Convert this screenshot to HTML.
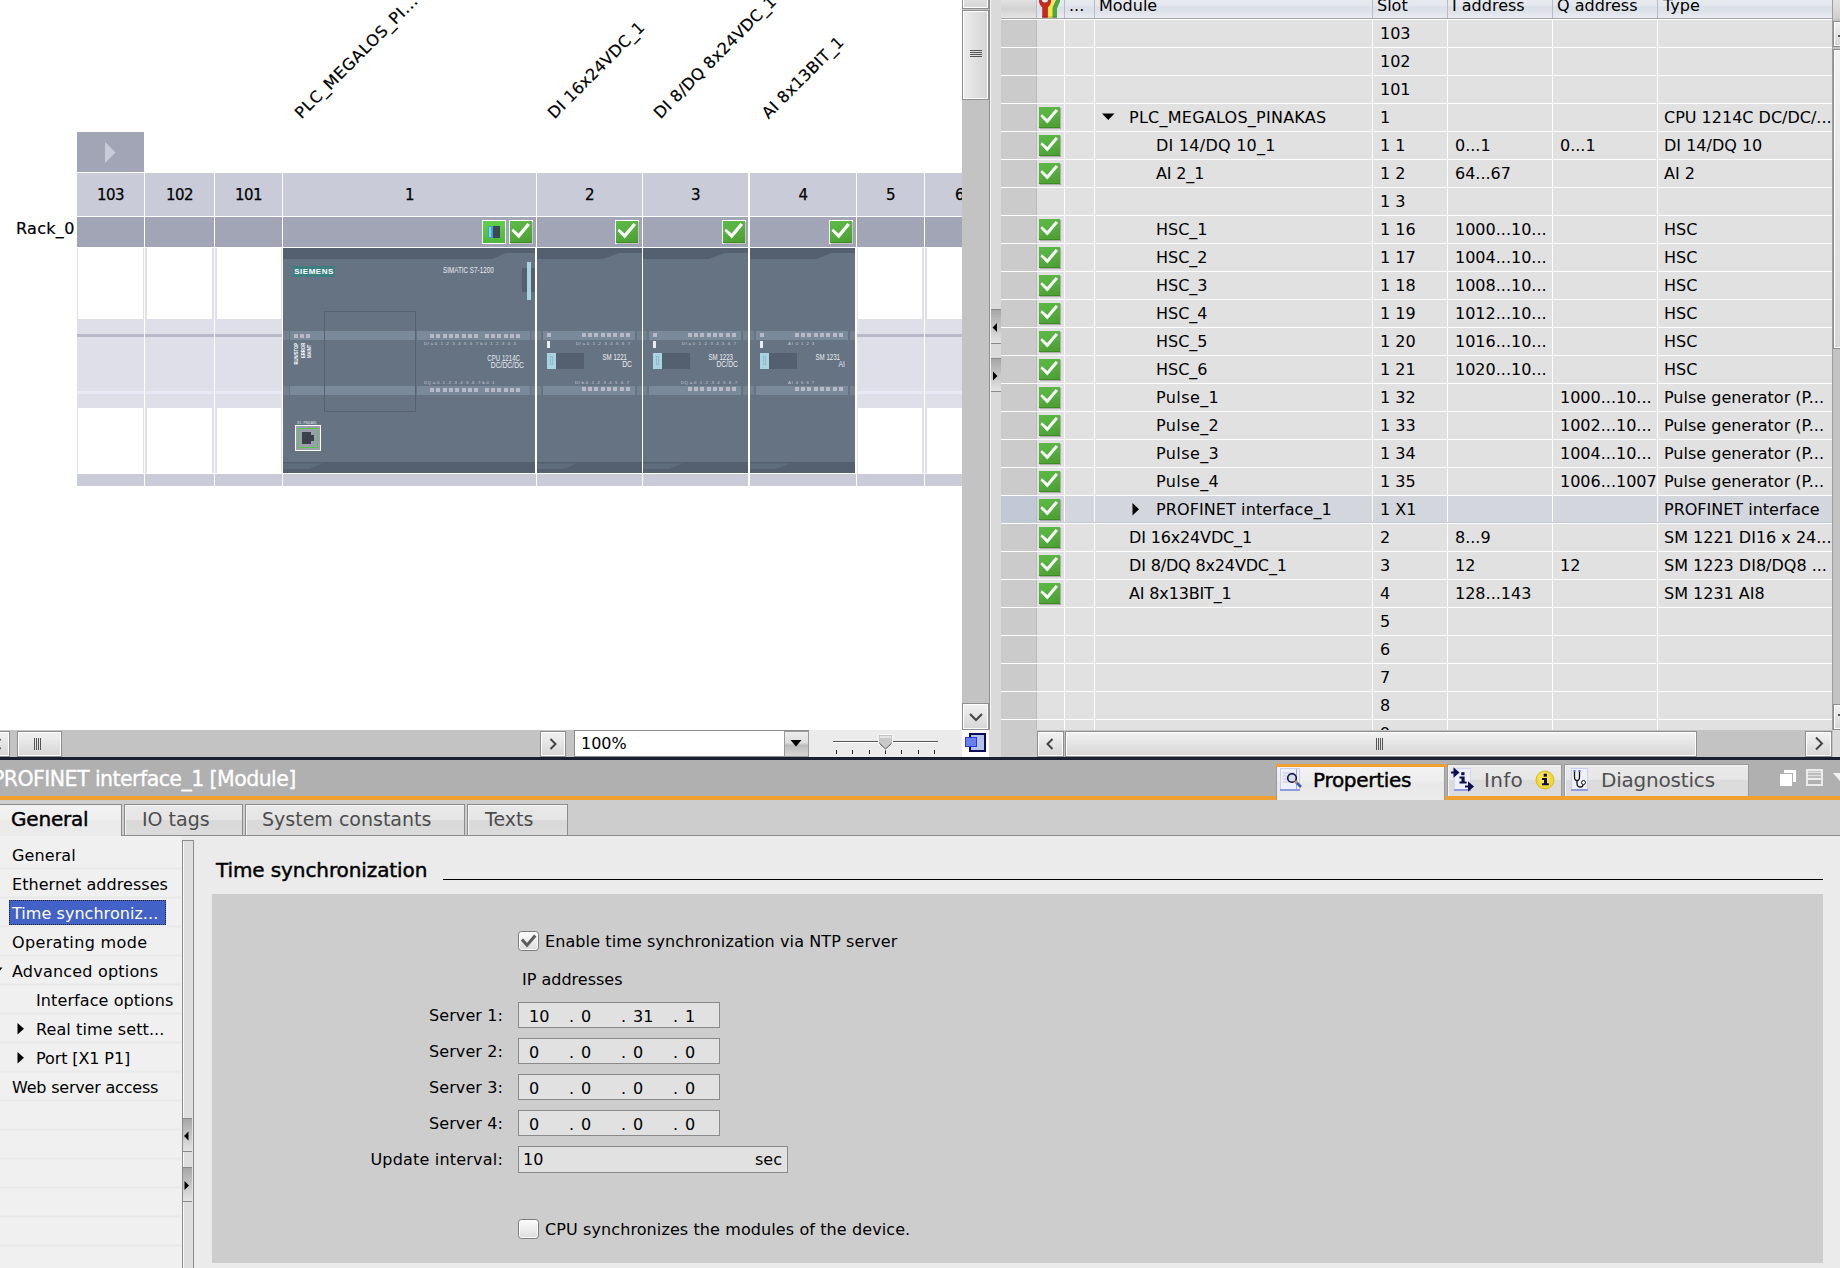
<!DOCTYPE html>
<html><head><meta charset="utf-8"><title>PROFINET interface_1 [Module]</title>
<style>
*{box-sizing:border-box;margin:0;padding:0}
html,body{width:1840px;height:1268px;overflow:hidden;background:#fff}
body{position:relative;font-family:'DejaVu Sans','Liberation Sans',sans-serif;font-size:16px;color:#000;line-height:1}
.a{position:absolute}
.t{position:absolute;white-space:nowrap;line-height:20px;height:20px}
.b{font-family:'DejaVu Sans','Liberation Sans',sans-serif;-webkit-text-stroke:0.45px #000}
svg{position:absolute;overflow:visible}
</style></head><body>

<div class="a" id="dev" style="left:0;top:0;width:962px;height:730px;background:#fff;overflow:hidden">
<div class="t" style="left:305px;top:103px;font-size:16px;transform-origin:0 100%;transform:rotate(-45deg);letter-spacing:0.75px;-webkit-text-stroke:0.2px #000">PLC_MEGALOS_PI...</div>
<div class="t" style="left:558px;top:103px;font-size:16px;transform-origin:0 100%;transform:rotate(-45deg);letter-spacing:0.3px;-webkit-text-stroke:0.2px #000">DI 16x24VDC_1</div>
<div class="t" style="left:664px;top:103px;font-size:16px;transform-origin:0 100%;transform:rotate(-45deg);letter-spacing:0.3px;-webkit-text-stroke:0.2px #000">DI 8/DQ 8x24VDC_1</div>
<div class="t" style="left:772px;top:103px;font-size:16px;transform-origin:0 100%;transform:rotate(-45deg);letter-spacing:0.3px;-webkit-text-stroke:0.2px #000">AI 8x13BIT_1</div>
<div class="a" style="left:77px;top:132px;width:67px;height:40px;background:#a2a5b6;"></div>
<svg class="a" style="left:105px;top:142px" width="11" height="22"><path d="M0 0 L10.5 10.5 L0 21 Z" fill="#c9cbd8"/></svg>
<div class="a" style="left:77px;top:173px;width:67px;height:43px;background:#c9cbd8;"></div>
<div class="a" style="left:77px;top:217px;width:67px;height:30px;background:#a2a5b6;"></div>
<div class="a" style="left:77px;top:474px;width:67px;height:12px;background:#c9cbd8;"></div>
<div class="t" style="left:77px;top:184.5px;width:67px;text-align:center;font-size:15px;letter-spacing:-0.6px;-webkit-text-stroke:0.25px #000">103</div>
<div class="a" style="left:145px;top:173px;width:69px;height:43px;background:#c9cbd8;"></div>
<div class="a" style="left:145px;top:217px;width:69px;height:30px;background:#a2a5b6;"></div>
<div class="a" style="left:145px;top:474px;width:69px;height:12px;background:#c9cbd8;"></div>
<div class="t" style="left:145px;top:184.5px;width:69px;text-align:center;font-size:15px;letter-spacing:-0.6px;-webkit-text-stroke:0.25px #000">102</div>
<div class="a" style="left:215px;top:173px;width:67px;height:43px;background:#c9cbd8;"></div>
<div class="a" style="left:215px;top:217px;width:67px;height:30px;background:#a2a5b6;"></div>
<div class="a" style="left:215px;top:474px;width:67px;height:12px;background:#c9cbd8;"></div>
<div class="t" style="left:215px;top:184.5px;width:67px;text-align:center;font-size:15px;letter-spacing:-0.6px;-webkit-text-stroke:0.25px #000">101</div>
<div class="a" style="left:283px;top:173px;width:253px;height:43px;background:#c9cbd8;"></div>
<div class="a" style="left:283px;top:217px;width:253px;height:30px;background:#a2a5b6;"></div>
<div class="a" style="left:283px;top:474px;width:253px;height:12px;background:#c9cbd8;"></div>
<div class="t" style="left:283px;top:184.5px;width:253px;text-align:center;font-size:15px;letter-spacing:-0.6px;-webkit-text-stroke:0.25px #000">1</div>
<div class="a" style="left:537px;top:173px;width:105px;height:43px;background:#c9cbd8;"></div>
<div class="a" style="left:537px;top:217px;width:105px;height:30px;background:#a2a5b6;"></div>
<div class="a" style="left:537px;top:474px;width:105px;height:12px;background:#c9cbd8;"></div>
<div class="t" style="left:537px;top:184.5px;width:105px;text-align:center;font-size:15px;letter-spacing:-0.6px;-webkit-text-stroke:0.25px #000">2</div>
<div class="a" style="left:643px;top:173px;width:105px;height:43px;background:#c9cbd8;"></div>
<div class="a" style="left:643px;top:217px;width:105px;height:30px;background:#a2a5b6;"></div>
<div class="a" style="left:643px;top:474px;width:105px;height:12px;background:#c9cbd8;"></div>
<div class="t" style="left:643px;top:184.5px;width:105px;text-align:center;font-size:15px;letter-spacing:-0.6px;-webkit-text-stroke:0.25px #000">3</div>
<div class="a" style="left:750px;top:173px;width:106px;height:43px;background:#c9cbd8;"></div>
<div class="a" style="left:750px;top:217px;width:106px;height:30px;background:#a2a5b6;"></div>
<div class="a" style="left:750px;top:474px;width:106px;height:12px;background:#c9cbd8;"></div>
<div class="t" style="left:750px;top:184.5px;width:106px;text-align:center;font-size:15px;letter-spacing:-0.6px;-webkit-text-stroke:0.25px #000">4</div>
<div class="a" style="left:857px;top:173px;width:67px;height:43px;background:#c9cbd8;"></div>
<div class="a" style="left:857px;top:217px;width:67px;height:30px;background:#a2a5b6;"></div>
<div class="a" style="left:857px;top:474px;width:67px;height:12px;background:#c9cbd8;"></div>
<div class="t" style="left:857px;top:184.5px;width:67px;text-align:center;font-size:15px;letter-spacing:-0.6px;-webkit-text-stroke:0.25px #000">5</div>
<div class="a" style="left:925px;top:173px;width:37px;height:43px;background:#c9cbd8;"></div>
<div class="a" style="left:925px;top:217px;width:37px;height:30px;background:#a2a5b6;"></div>
<div class="a" style="left:925px;top:474px;width:37px;height:12px;background:#c9cbd8;"></div>
<div class="t" style="left:955px;top:184.5px;font-size:15px;-webkit-text-stroke:0.25px #000">6</div>
<div class="t" style="left:16px;top:219px;font-size:16px;color:#000;letter-spacing:0.3px;-webkit-text-stroke:0.2px #000">Rack_0</div>
<div class="a" style="left:77px;top:248px;width:67px;height:225px;background:#fff;border-left:1px solid #dfdfe9;border-right:1px solid #dfdfe9"></div>
<div class="a" style="left:77px;top:319px;width:67px;height:89px;background:#dfdfe9;"></div>
<div class="a" style="left:77px;top:334px;width:67px;height:3px;background:#b9bac9;"></div>
<div class="a" style="left:77px;top:391px;width:67px;height:3px;background:#e8e9f6;"></div>
<div class="a" style="left:145px;top:248px;width:69px;height:225px;background:#fff;border-left:2px solid #dfdfe9;border-right:2px solid #dfdfe9"></div>
<div class="a" style="left:145px;top:319px;width:69px;height:89px;background:#dfdfe9;"></div>
<div class="a" style="left:145px;top:334px;width:69px;height:3px;background:#b9bac9;"></div>
<div class="a" style="left:145px;top:391px;width:69px;height:3px;background:#e8e9f6;"></div>
<div class="a" style="left:215px;top:248px;width:67px;height:225px;background:#fff;border-left:2px solid #dfdfe9;border-right:1px solid #dfdfe9"></div>
<div class="a" style="left:215px;top:319px;width:67px;height:89px;background:#dfdfe9;"></div>
<div class="a" style="left:215px;top:334px;width:67px;height:3px;background:#b9bac9;"></div>
<div class="a" style="left:215px;top:391px;width:67px;height:3px;background:#e8e9f6;"></div>
<div class="a" style="left:857px;top:248px;width:67px;height:225px;background:#fff;border-left:1px solid #dfdfe9;border-right:2px solid #dfdfe9"></div>
<div class="a" style="left:857px;top:319px;width:67px;height:89px;background:#dfdfe9;"></div>
<div class="a" style="left:857px;top:334px;width:67px;height:3px;background:#b9bac9;"></div>
<div class="a" style="left:857px;top:391px;width:67px;height:3px;background:#e8e9f6;"></div>
<div class="a" style="left:925px;top:248px;width:37px;height:225px;background:#fff;border-left:2px solid #dfdfe9;border-right:0px solid #dfdfe9"></div>
<div class="a" style="left:925px;top:319px;width:37px;height:89px;background:#dfdfe9;"></div>
<div class="a" style="left:925px;top:334px;width:37px;height:3px;background:#b9bac9;"></div>
<div class="a" style="left:925px;top:391px;width:37px;height:3px;background:#e8e9f6;"></div>
<div class="a" style="left:283px;top:248px;width:252px;height:225px;background:#667383;overflow:hidden">
<svg style="left:0;top:0" width="252" height="225"><path d="M0 0 H252 V5 H223 L209 11 H0 Z" fill="#54606f"/>
<path d="M0 214 H252 V225 H0 Z" fill="#54606f"/><path d="M0 215.5 H40 L26 221 H0 Z" fill="#5f6c7b"/></svg>
</div>
<div class="a" style="left:283px;top:331px;width:6px;height:9px;background:#72808f;"></div>
<div class="a" style="left:290px;top:331px;width:34px;height:9px;background:#7b8a9a;"></div>
<div class="a" style="left:325px;top:331px;width:90px;height:9px;background:#7b8a9a;"></div>
<div class="a" style="left:417px;top:331px;width:113px;height:9px;background:#7b8a9a;"></div>
<div class="a" style="left:531px;top:331px;width:4px;height:9px;background:#7b8a9a;opacity:.6"></div>
<div class="a" style="left:283px;top:386px;width:6px;height:9px;background:#72808f;"></div>
<div class="a" style="left:290px;top:386px;width:34px;height:9px;background:#7b8a9a;"></div>
<div class="a" style="left:325px;top:386px;width:90px;height:9px;background:#7b8a9a;"></div>
<div class="a" style="left:417px;top:386px;width:113px;height:9px;background:#7b8a9a;"></div>
<div class="a" style="left:531px;top:386px;width:4px;height:9px;background:#7b8a9a;opacity:.6"></div>
<div class="a" style="left:324px;top:311px;width:92px;height:101px;border:1px solid #55616f"></div>
<div class="a" style="left:293px;top:266px;width:42px;height:11px;background:#3b7f80;color:#fff;font-family:'Liberation Sans','DejaVu Sans',sans-serif;font-weight:bold;font-size:8px;line-height:11px;text-align:center;letter-spacing:0.5px">SIEMENS</div>
<div class="t" style="left:443px;top:260px;font-family:'Liberation Sans',sans-serif;font-size:9px;color:#e8ebf0;transform-origin:0 50%;transform:scaleX(.7)">SIMATIC S7-1200</div>
<div class="a" style="left:522px;top:268px;width:13px;height:24px;background:#54606f;"></div>
<div class="a" style="left:527px;top:262px;width:4px;height:38px;background:#a9d3e0;"></div>
<div class="a" style="left:294px;top:334px;width:4px;height:4px;background:#b7bac6;"></div>
<div class="a" style="left:300px;top:334px;width:4px;height:4px;background:#b7bac6;"></div>
<div class="a" style="left:306px;top:334px;width:4px;height:4px;background:#b7bac6;"></div>
<div class="a" style="left:430px;top:334px;width:4px;height:4px;background:#b7bac6;"></div>
<div class="a" style="left:436px;top:334px;width:4px;height:4px;background:#b7bac6;"></div>
<div class="a" style="left:443px;top:334px;width:4px;height:4px;background:#b7bac6;"></div>
<div class="a" style="left:449px;top:334px;width:4px;height:4px;background:#b7bac6;"></div>
<div class="a" style="left:455px;top:334px;width:4px;height:4px;background:#b7bac6;"></div>
<div class="a" style="left:462px;top:334px;width:4px;height:4px;background:#b7bac6;"></div>
<div class="a" style="left:468px;top:334px;width:4px;height:4px;background:#b7bac6;"></div>
<div class="a" style="left:474px;top:334px;width:4px;height:4px;background:#b7bac6;"></div>
<div class="a" style="left:485px;top:334px;width:4px;height:4px;background:#b7bac6;"></div>
<div class="a" style="left:491px;top:334px;width:4px;height:4px;background:#b7bac6;"></div>
<div class="a" style="left:497px;top:334px;width:4px;height:4px;background:#b7bac6;"></div>
<div class="a" style="left:504px;top:334px;width:4px;height:4px;background:#b7bac6;"></div>
<div class="a" style="left:510px;top:334px;width:4px;height:4px;background:#b7bac6;"></div>
<div class="a" style="left:516px;top:334px;width:4px;height:4px;background:#b7bac6;"></div>
<div class="a" style="left:430px;top:388px;width:4px;height:4px;background:#b7bac6;"></div>
<div class="a" style="left:436px;top:388px;width:4px;height:4px;background:#b7bac6;"></div>
<div class="a" style="left:443px;top:388px;width:4px;height:4px;background:#b7bac6;"></div>
<div class="a" style="left:449px;top:388px;width:4px;height:4px;background:#b7bac6;"></div>
<div class="a" style="left:455px;top:388px;width:4px;height:4px;background:#b7bac6;"></div>
<div class="a" style="left:462px;top:388px;width:4px;height:4px;background:#b7bac6;"></div>
<div class="a" style="left:468px;top:388px;width:4px;height:4px;background:#b7bac6;"></div>
<div class="a" style="left:474px;top:388px;width:4px;height:4px;background:#b7bac6;"></div>
<div class="a" style="left:485px;top:388px;width:4px;height:4px;background:#b7bac6;"></div>
<div class="a" style="left:491px;top:388px;width:4px;height:4px;background:#b7bac6;"></div>
<div class="a" style="left:497px;top:388px;width:4px;height:4px;background:#b7bac6;"></div>
<div class="a" style="left:504px;top:388px;width:4px;height:4px;background:#b7bac6;"></div>
<div class="a" style="left:510px;top:388px;width:4px;height:4px;background:#b7bac6;"></div>
<div class="a" style="left:516px;top:388px;width:4px;height:4px;background:#b7bac6;"></div>
<div class="t" style="left:424px;top:341px;height:5px;line-height:5px;font-family:Liberation Sans,sans-serif;font-size:4.2px;letter-spacing:0.4px;color:rgba(232,236,242,.75)">DI a.0 .1 .2 .3 .4 .5 .6 .7 b.0 .1 .2 .3 .4 .5</div>
<div class="t" style="left:424px;top:380px;height:5px;line-height:5px;font-family:Liberation Sans,sans-serif;font-size:4.2px;letter-spacing:0.4px;color:rgba(232,236,242,.75)">DQ a.0 .1 .2 .3 .4 .5 .6 .7 b.0 .1</div>
<div class="t" style="left:470px;top:348px;width:50px;text-align:right;font-family:'Liberation Sans',sans-serif;font-size:8.5px;color:#e8ebf0;transform-origin:100% 50%;transform:scaleX(.72)">CPU 1214C</div>
<div class="t" style="left:474px;top:355px;width:50px;text-align:right;font-family:'Liberation Sans',sans-serif;font-size:8.5px;color:#e8ebf0;transform-origin:100% 50%;transform:scaleX(.8)">DC/DC/DC</div>
<div class="t" style="left:293px;top:346px;height:6px;line-height:6px;font-family:'Liberation Sans',sans-serif;font-size:6px;font-weight:bold;color:#fff;transform-origin:0 0;transform:translate(0,18.5px) rotate(-90deg) scaleX(.7)">RUN/STOP</div>
<div class="t" style="left:300px;top:346px;height:6px;line-height:6px;font-family:'Liberation Sans',sans-serif;font-size:6px;font-weight:bold;color:#fff;transform-origin:0 0;transform:translate(0,12px) rotate(-90deg) scaleX(.7)">ERROR</div>
<div class="t" style="left:306px;top:346px;height:6px;line-height:6px;font-family:'Liberation Sans',sans-serif;font-size:6px;font-weight:bold;color:#fff;transform-origin:0 0;transform:translate(0,12px) rotate(-90deg) scaleX(.7)">MAINT</div>
<div class="a" style="left:295px;top:425px;width:26px;height:26px;background:#9a9eae;border:1px solid #fff"></div>
<div class="a" style="left:298px;top:428px;width:20px;height:20px;border:1px solid #58c843"></div>
<div class="a" style="left:302px;top:432px;width:9px;height:12px;background:#3b404b;"></div>
<div class="a" style="left:311px;top:435px;width:3px;height:6px;background:#3b404b;"></div>
<div class="t" style="left:297px;top:419.5px;height:5px;line-height:5px;font-size:4px;color:#e8ebf0;font-family:'Liberation Sans',sans-serif;transform-origin:0 50%;transform:scaleX(.8)">X1 : PN(LAN)</div>
<div class="a" style="left:537px;top:248px;width:105px;height:225px;background:#667383;overflow:hidden">
<svg style="left:0;top:0" width="105" height="225"><path d="M0 0 H105 V5 H82 L66 11 H0 Z" fill="#54606f"/>
<path d="M0 214 H105 V225 H0 Z" fill="#54606f"/><path d="M0 215.5 H40 L26 221 H0 Z" fill="#5f6c7b"/></svg>
</div>
<div class="a" style="left:537px;top:331px;width:4px;height:9px;background:#7b8a9a;opacity:.6"></div>
<div class="a" style="left:543px;top:331px;width:92px;height:9px;background:#7b8a9a;"></div>
<div class="a" style="left:637px;top:331px;width:5px;height:9px;background:#7b8a9a;opacity:.6"></div>
<div class="a" style="left:537px;top:386px;width:4px;height:9px;background:#7b8a9a;opacity:.6"></div>
<div class="a" style="left:543px;top:386px;width:92px;height:9px;background:#7b8a9a;"></div>
<div class="a" style="left:637px;top:386px;width:5px;height:9px;background:#7b8a9a;opacity:.6"></div>
<div class="a" style="left:547px;top:333px;width:4px;height:4px;background:#b7bac6;"></div>
<div class="a" style="left:582px;top:333px;width:4px;height:4px;background:#b7bac6;"></div>
<div class="a" style="left:588px;top:333px;width:4px;height:4px;background:#b7bac6;"></div>
<div class="a" style="left:594px;top:333px;width:4px;height:4px;background:#b7bac6;"></div>
<div class="a" style="left:601px;top:333px;width:4px;height:4px;background:#b7bac6;"></div>
<div class="a" style="left:607px;top:333px;width:4px;height:4px;background:#b7bac6;"></div>
<div class="a" style="left:613px;top:333px;width:4px;height:4px;background:#b7bac6;"></div>
<div class="a" style="left:620px;top:333px;width:4px;height:4px;background:#b7bac6;"></div>
<div class="a" style="left:626px;top:333px;width:4px;height:4px;background:#b7bac6;"></div>
<div class="a" style="left:582px;top:387px;width:4px;height:4px;background:#b7bac6;"></div>
<div class="a" style="left:588px;top:387px;width:4px;height:4px;background:#b7bac6;"></div>
<div class="a" style="left:594px;top:387px;width:4px;height:4px;background:#b7bac6;"></div>
<div class="a" style="left:601px;top:387px;width:4px;height:4px;background:#b7bac6;"></div>
<div class="a" style="left:607px;top:387px;width:4px;height:4px;background:#b7bac6;"></div>
<div class="a" style="left:613px;top:387px;width:4px;height:4px;background:#b7bac6;"></div>
<div class="a" style="left:620px;top:387px;width:4px;height:4px;background:#b7bac6;"></div>
<div class="a" style="left:626px;top:387px;width:4px;height:4px;background:#b7bac6;"></div>
<div class="a" style="left:547px;top:341px;width:3px;height:7px;background:#e8ebf0;"></div>
<div class="t" style="left:576px;top:341px;height:5px;line-height:5px;font-family:Liberation Sans,sans-serif;font-size:4.2px;letter-spacing:0.4px;color:rgba(232,236,242,.75)">DI a.0 .1 .2 .3 .4 .5 .6 .7</div>
<div class="t" style="left:575px;top:380px;height:5px;line-height:5px;font-family:Liberation Sans,sans-serif;font-size:4.2px;letter-spacing:0.4px;color:rgba(232,236,242,.75)">DI b.0 .1 .2 .3 .4 .5 .6 .7</div>
<div class="a" style="left:547px;top:353px;width:9px;height:16px;background:#a9d3e0;"></div>
<div class="a" style="left:556px;top:353px;width:28px;height:16px;background:#54606f;"></div>
<div class="a" style="left:550px;top:356px;width:3px;height:9px;border:1px solid #8fbccb"></div>
<div class="t" style="left:577px;top:347px;width:50px;text-align:right;font-family:'Liberation Sans',sans-serif;font-size:8.5px;color:#e8ebf0;transform-origin:100% 50%;transform:scaleX(.72)">SM 1221</div>
<div class="t" style="left:582px;top:354px;width:50px;text-align:right;font-family:'Liberation Sans',sans-serif;font-size:8.5px;color:#e8ebf0;transform-origin:100% 50%;transform:scaleX(.8)">DC</div>
<div class="a" style="left:643px;top:248px;width:105px;height:225px;background:#667383;overflow:hidden">
<svg style="left:0;top:0" width="105" height="225"><path d="M0 0 H105 V5 H82 L66 11 H0 Z" fill="#54606f"/>
<path d="M0 214 H105 V225 H0 Z" fill="#54606f"/><path d="M0 215.5 H40 L26 221 H0 Z" fill="#5f6c7b"/></svg>
</div>
<div class="a" style="left:643px;top:331px;width:4px;height:9px;background:#7b8a9a;opacity:.6"></div>
<div class="a" style="left:649px;top:331px;width:92px;height:9px;background:#7b8a9a;"></div>
<div class="a" style="left:743px;top:331px;width:5px;height:9px;background:#7b8a9a;opacity:.6"></div>
<div class="a" style="left:643px;top:386px;width:4px;height:9px;background:#7b8a9a;opacity:.6"></div>
<div class="a" style="left:649px;top:386px;width:92px;height:9px;background:#7b8a9a;"></div>
<div class="a" style="left:743px;top:386px;width:5px;height:9px;background:#7b8a9a;opacity:.6"></div>
<div class="a" style="left:653px;top:333px;width:4px;height:4px;background:#b7bac6;"></div>
<div class="a" style="left:688px;top:333px;width:4px;height:4px;background:#b7bac6;"></div>
<div class="a" style="left:694px;top:333px;width:4px;height:4px;background:#b7bac6;"></div>
<div class="a" style="left:700px;top:333px;width:4px;height:4px;background:#b7bac6;"></div>
<div class="a" style="left:707px;top:333px;width:4px;height:4px;background:#b7bac6;"></div>
<div class="a" style="left:713px;top:333px;width:4px;height:4px;background:#b7bac6;"></div>
<div class="a" style="left:719px;top:333px;width:4px;height:4px;background:#b7bac6;"></div>
<div class="a" style="left:726px;top:333px;width:4px;height:4px;background:#b7bac6;"></div>
<div class="a" style="left:732px;top:333px;width:4px;height:4px;background:#b7bac6;"></div>
<div class="a" style="left:688px;top:387px;width:4px;height:4px;background:#b7bac6;"></div>
<div class="a" style="left:694px;top:387px;width:4px;height:4px;background:#b7bac6;"></div>
<div class="a" style="left:700px;top:387px;width:4px;height:4px;background:#b7bac6;"></div>
<div class="a" style="left:707px;top:387px;width:4px;height:4px;background:#b7bac6;"></div>
<div class="a" style="left:713px;top:387px;width:4px;height:4px;background:#b7bac6;"></div>
<div class="a" style="left:719px;top:387px;width:4px;height:4px;background:#b7bac6;"></div>
<div class="a" style="left:726px;top:387px;width:4px;height:4px;background:#b7bac6;"></div>
<div class="a" style="left:732px;top:387px;width:4px;height:4px;background:#b7bac6;"></div>
<div class="a" style="left:653px;top:341px;width:3px;height:7px;background:#e8ebf0;"></div>
<div class="t" style="left:682px;top:341px;height:5px;line-height:5px;font-family:Liberation Sans,sans-serif;font-size:4.2px;letter-spacing:0.4px;color:rgba(232,236,242,.75)">DI a.0 .1 .2 .3 .4 .5 .6 .7</div>
<div class="t" style="left:681px;top:380px;height:5px;line-height:5px;font-family:Liberation Sans,sans-serif;font-size:4.2px;letter-spacing:0.4px;color:rgba(232,236,242,.75)">DQ a.0 .1 .2 .3 .4 .5 .6 .7</div>
<div class="a" style="left:653px;top:353px;width:9px;height:16px;background:#a9d3e0;"></div>
<div class="a" style="left:662px;top:353px;width:28px;height:16px;background:#54606f;"></div>
<div class="a" style="left:656px;top:356px;width:3px;height:9px;border:1px solid #8fbccb"></div>
<div class="t" style="left:683px;top:347px;width:50px;text-align:right;font-family:'Liberation Sans',sans-serif;font-size:8.5px;color:#e8ebf0;transform-origin:100% 50%;transform:scaleX(.72)">SM 1223</div>
<div class="t" style="left:688px;top:354px;width:50px;text-align:right;font-family:'Liberation Sans',sans-serif;font-size:8.5px;color:#e8ebf0;transform-origin:100% 50%;transform:scaleX(.8)">DC/DC</div>
<div class="a" style="left:750px;top:248px;width:105px;height:225px;background:#667383;overflow:hidden">
<svg style="left:0;top:0" width="105" height="225"><path d="M0 0 H105 V5 H82 L66 11 H0 Z" fill="#54606f"/>
<path d="M0 214 H105 V225 H0 Z" fill="#54606f"/><path d="M0 215.5 H40 L26 221 H0 Z" fill="#5f6c7b"/></svg>
</div>
<div class="a" style="left:750px;top:331px;width:4px;height:9px;background:#7b8a9a;opacity:.6"></div>
<div class="a" style="left:756px;top:331px;width:92px;height:9px;background:#7b8a9a;"></div>
<div class="a" style="left:850px;top:331px;width:5px;height:9px;background:#7b8a9a;opacity:.6"></div>
<div class="a" style="left:750px;top:386px;width:4px;height:9px;background:#7b8a9a;opacity:.6"></div>
<div class="a" style="left:756px;top:386px;width:92px;height:9px;background:#7b8a9a;"></div>
<div class="a" style="left:850px;top:386px;width:5px;height:9px;background:#7b8a9a;opacity:.6"></div>
<div class="a" style="left:760px;top:333px;width:4px;height:4px;background:#b7bac6;"></div>
<div class="a" style="left:795px;top:333px;width:4px;height:4px;background:#b7bac6;"></div>
<div class="a" style="left:801px;top:333px;width:4px;height:4px;background:#b7bac6;"></div>
<div class="a" style="left:807px;top:333px;width:4px;height:4px;background:#b7bac6;"></div>
<div class="a" style="left:814px;top:333px;width:4px;height:4px;background:#b7bac6;"></div>
<div class="a" style="left:820px;top:333px;width:4px;height:4px;background:#b7bac6;"></div>
<div class="a" style="left:826px;top:333px;width:4px;height:4px;background:#b7bac6;"></div>
<div class="a" style="left:833px;top:333px;width:4px;height:4px;background:#b7bac6;"></div>
<div class="a" style="left:839px;top:333px;width:4px;height:4px;background:#b7bac6;"></div>
<div class="a" style="left:795px;top:387px;width:4px;height:4px;background:#b7bac6;"></div>
<div class="a" style="left:801px;top:387px;width:4px;height:4px;background:#b7bac6;"></div>
<div class="a" style="left:807px;top:387px;width:4px;height:4px;background:#b7bac6;"></div>
<div class="a" style="left:814px;top:387px;width:4px;height:4px;background:#b7bac6;"></div>
<div class="a" style="left:820px;top:387px;width:4px;height:4px;background:#b7bac6;"></div>
<div class="a" style="left:826px;top:387px;width:4px;height:4px;background:#b7bac6;"></div>
<div class="a" style="left:833px;top:387px;width:4px;height:4px;background:#b7bac6;"></div>
<div class="a" style="left:839px;top:387px;width:4px;height:4px;background:#b7bac6;"></div>
<div class="a" style="left:760px;top:341px;width:3px;height:7px;background:#e8ebf0;"></div>
<div class="t" style="left:788px;top:341px;height:5px;line-height:5px;font-family:Liberation Sans,sans-serif;font-size:4.2px;letter-spacing:0.9px;color:rgba(232,236,242,.75)">AI 0 1 2 3</div>
<div class="t" style="left:788px;top:380px;height:5px;line-height:5px;font-family:Liberation Sans,sans-serif;font-size:4.2px;letter-spacing:0.9px;color:rgba(232,236,242,.75)">AI 4 5 6 7</div>
<div class="a" style="left:760px;top:353px;width:9px;height:16px;background:#a9d3e0;"></div>
<div class="a" style="left:769px;top:353px;width:28px;height:16px;background:#54606f;"></div>
<div class="a" style="left:763px;top:356px;width:3px;height:9px;border:1px solid #8fbccb"></div>
<div class="t" style="left:790px;top:347px;width:50px;text-align:right;font-family:'Liberation Sans',sans-serif;font-size:8.5px;color:#e8ebf0;transform-origin:100% 50%;transform:scaleX(.72)">SM 1231</div>
<div class="t" style="left:795px;top:354px;width:50px;text-align:right;font-family:'Liberation Sans',sans-serif;font-size:8.5px;color:#e8ebf0;transform-origin:100% 50%;transform:scaleX(.8)">AI</div>
<div class="a" style="left:482px;top:220px;width:24px;height:24px;background:#fff"></div>
<div class="a" style="left:483px;top:221px;width:22px;height:22px;background:linear-gradient(180deg,#62cf4c,#4db83a)"></div>
<div class="a" style="left:488px;top:226px;width:5px;height:12px;background:#3ba9c4;"></div>
<div class="a" style="left:489px;top:227px;width:2px;height:10px;background:#7fd4e6;"></div>
<div class="a" style="left:493px;top:226px;width:7px;height:12px;background:#3f4655;"></div>
<div class="a" style="left:509px;top:220px;width:24px;height:24px;background:#fff"></div>
<div class="a" style="left:510px;top:221px;width:22px;height:22px;background:linear-gradient(160deg,#5dba47 0%,#56b03f 45%,#4a9c31 100%);box-shadow:1px 1px 1px rgba(0,0,0,.22),inset 0 -1px 0 rgba(40,120,20,.5)"><svg width="22" height="22" viewBox="0 0 21 21" style="left:0;top:0"><path d="M1.4 9.2 L2.9 7.3 L8.2 11.9 L16.7 1.9 L19.1 3.7 L8.4 16.6 Z" fill="#fff"/></svg></div>
<div class="a" style="left:615px;top:220px;width:24px;height:24px;background:#fff"></div>
<div class="a" style="left:616px;top:221px;width:22px;height:22px;background:linear-gradient(160deg,#5dba47 0%,#56b03f 45%,#4a9c31 100%);box-shadow:1px 1px 1px rgba(0,0,0,.22),inset 0 -1px 0 rgba(40,120,20,.5)"><svg width="22" height="22" viewBox="0 0 21 21" style="left:0;top:0"><path d="M1.4 9.2 L2.9 7.3 L8.2 11.9 L16.7 1.9 L19.1 3.7 L8.4 16.6 Z" fill="#fff"/></svg></div>
<div class="a" style="left:722px;top:220px;width:24px;height:24px;background:#fff"></div>
<div class="a" style="left:723px;top:221px;width:22px;height:22px;background:linear-gradient(160deg,#5dba47 0%,#56b03f 45%,#4a9c31 100%);box-shadow:1px 1px 1px rgba(0,0,0,.22),inset 0 -1px 0 rgba(40,120,20,.5)"><svg width="22" height="22" viewBox="0 0 21 21" style="left:0;top:0"><path d="M1.4 9.2 L2.9 7.3 L8.2 11.9 L16.7 1.9 L19.1 3.7 L8.4 16.6 Z" fill="#fff"/></svg></div>
<div class="a" style="left:829px;top:220px;width:24px;height:24px;background:#fff"></div>
<div class="a" style="left:830px;top:221px;width:22px;height:22px;background:linear-gradient(160deg,#5dba47 0%,#56b03f 45%,#4a9c31 100%);box-shadow:1px 1px 1px rgba(0,0,0,.22),inset 0 -1px 0 rgba(40,120,20,.5)"><svg width="22" height="22" viewBox="0 0 21 21" style="left:0;top:0"><path d="M1.4 9.2 L2.9 7.3 L8.2 11.9 L16.7 1.9 L19.1 3.7 L8.4 16.6 Z" fill="#fff"/></svg></div>
</div>
<div class="a" style="left:962px;top:0px;width:27px;height:730px;background:#c3c3c3;"></div>
<div class="a" style="left:962px;top:-18px;width:27px;height:27px;background:linear-gradient(180deg,#f2f2f2,#d6d6d6);border:1px solid #8e8e8e;box-shadow:inset 0 0 0 1px #fff;"></div>
<div class="a" style="left:962px;top:10px;width:27px;height:90px;background:linear-gradient(90deg,#ececec,#d4d4d4);border:1px solid #8e8e8e;box-shadow:inset 0 0 0 1px #fff"></div>
<div class="a" style="left:970px;top:50px;width:12px;height:1px;background:#555;"></div>
<div class="a" style="left:970px;top:52px;width:12px;height:1px;background:#555;"></div>
<div class="a" style="left:970px;top:54px;width:12px;height:1px;background:#555;"></div>
<div class="a" style="left:970px;top:56px;width:12px;height:1px;background:#555;"></div>
<div class="a" style="left:962px;top:703px;width:27px;height:27px;background:linear-gradient(180deg,#f2f2f2,#d6d6d6);border:1px solid #8e8e8e;box-shadow:inset 0 0 0 1px #fff;"></div>
<svg style="left:0;top:0" width="1" height="1"><path d="M970.0 714.0 L976 720.0 L982.0 714.0" fill="none" stroke="#444" stroke-width="2"/></svg>
<div class="a" style="left:0px;top:730px;width:962px;height:27px;background:#c3c3c3;"></div>
<div class="a" style="left:-16px;top:731px;width:26px;height:26px;background:linear-gradient(180deg,#f2f2f2,#d6d6d6);border:1px solid #8e8e8e;box-shadow:inset 0 0 0 1px #fff;"></div>
<svg style="left:0;top:0" width="1" height="1"><path d="M0.5 739.0 L-4.5 744 L0.5 749.0" fill="none" stroke="#444" stroke-width="2"/></svg>
<div class="a" style="left:17px;top:731px;width:45px;height:26px;background:linear-gradient(180deg,#f2f2f2,#d6d6d6);border:1px solid #8e8e8e;box-shadow:inset 0 0 0 1px #fff;"></div>
<div class="a" style="left:34px;top:738px;width:1px;height:12px;background:#555;"></div>
<div class="a" style="left:36px;top:738px;width:1px;height:12px;background:#555;"></div>
<div class="a" style="left:38px;top:738px;width:1px;height:12px;background:#555;"></div>
<div class="a" style="left:40px;top:738px;width:1px;height:12px;background:#555;"></div>
<div class="a" style="left:540px;top:731px;width:26px;height:26px;background:linear-gradient(180deg,#f2f2f2,#d6d6d6);border:1px solid #8e8e8e;box-shadow:inset 0 0 0 1px #fff;"></div>
<svg style="left:0;top:0" width="1" height="1"><path d="M550.5 739.0 L555.5 744 L550.5 749.0" fill="none" stroke="#444" stroke-width="2"/></svg>
<div class="a" style="left:574px;top:730px;width:235px;height:27px;background:#fff;border:1px solid #8e8e8e"></div>
<div class="t" style="left:581px;top:734px;font-size:16px;color:#000;">100%</div>
<div class="a" style="left:784px;top:731px;width:25px;height:26px;background:linear-gradient(180deg,#eee 0%,#ddd 45%,#bbb 55%,#d8d8d8 100%);border:1px solid #999"></div>
<svg style="left:790px;top:739px" width="12" height="8"><path d="M0.5 1 H11.5 L6 7.5 Z" fill="#000"/></svg>
<div class="a" style="left:809px;top:730px;width:153px;height:27px;background:#ebebeb;"></div>
<div class="a" style="left:833px;top:741px;width:105px;height:1px;background:#555;"></div>
<div class="a" style="left:833px;top:742px;width:105px;height:1px;background:#fff;"></div>
<div class="a" style="left:836px;top:750px;width:1px;height:4px;background:#222;"></div>
<div class="a" style="left:852px;top:750px;width:1px;height:4px;background:#222;"></div>
<div class="a" style="left:869px;top:750px;width:1px;height:4px;background:#222;"></div>
<div class="a" style="left:885px;top:750px;width:1px;height:4px;background:#222;"></div>
<div class="a" style="left:901px;top:750px;width:1px;height:4px;background:#222;"></div>
<div class="a" style="left:918px;top:750px;width:1px;height:4px;background:#222;"></div>
<div class="a" style="left:934px;top:750px;width:1px;height:4px;background:#222;"></div>
<svg style="left:878px;top:734px" width="15" height="17"><path d="M0.5 1.5 Q0.5 0.5 1.5 0.5 H13.5 Q14.5 0.5 14.5 1.5 V9.5 L7.5 16 L0.5 9.5 Z" fill="#bdbdbd" stroke="#fff" stroke-width="1"/><path d="M1.5 1.5 H13.5 V9 L7.5 14.8 L1.5 9 Z" fill="#c9c9c9"/><path d="M2 2 H13 V4 H2 Z" fill="#e6e6e6"/><path d="M1.5 9.3 L7.5 15 L13.5 9.3" fill="none" stroke="#555" stroke-width="1"/></svg>
<div class="a" style="left:962px;top:730px;width:27px;height:27px;background:#fff;"></div>
<div class="a" style="left:969px;top:733px;width:17px;height:19px;background:#b4c2e4;border:2px solid #0c0c5e"></div>
<div class="a" style="left:965px;top:737px;width:12px;height:10px;background:#6a7fe8;border:1px solid #2a39e8;box-shadow:0 0 0 0 #000"></div>
<div class="a" style="left:989px;top:0px;width:12px;height:757px;background:#dadada;"></div>
<div class="a" style="left:989px;top:0px;width:1px;height:730px;background:#8f8f8f;"></div>
<div class="a" style="left:990px;top:0px;width:1px;height:730px;background:#f4f4f4;"></div>
<div class="a" style="left:991px;top:309px;width:10px;height:35px;background:linear-gradient(180deg,#a6a6a6,#e4e4e4);border-top:1px solid #888;border-bottom:1px solid #888"></div>
<svg style="left:0;top:0" width="1" height="1"><path d="M997.0 323.0 L992.5 327.5 L997.0 332.0 Z" fill="#000"/></svg>
<div class="a" style="left:991px;top:358px;width:10px;height:34px;background:linear-gradient(180deg,#a6a6a6,#e4e4e4);border-top:1px solid #888;border-bottom:1px solid #888"></div>
<svg style="left:0;top:0" width="1" height="1"><path d="M993.0 371.5 L997.5 376.0 L993.0 380.5 Z" fill="#000"/></svg>
<div class="a" id="tbl" style="left:1001px;top:0;width:839px;height:730px;background:#fff;overflow:hidden">
<div class="a" style="left:0px;top:0px;width:36px;height:18px;background:linear-gradient(180deg,#e2e2e2 0%,#d2d2d2 50%,#e4e4e4 100%);"></div>
<div class="a" style="left:36px;top:0px;width:27px;height:18px;background:linear-gradient(180deg,#e6e9ee 0%,#e4e7ed 33%,#dbdfe7 38%,#dde1e8 60%,#e9ecf1 100%);"></div>
<div class="a" style="left:63px;top:0px;width:1px;height:18px;background:#b9bcc2;"></div>
<div class="a" style="left:64px;top:0px;width:29px;height:18px;background:linear-gradient(180deg,#e6e9ee 0%,#e4e7ed 33%,#dbdfe7 38%,#dde1e8 60%,#e9ecf1 100%);"></div>
<div class="a" style="left:93px;top:0px;width:1px;height:18px;background:#b9bcc2;"></div>
<div class="a" style="left:94px;top:0px;width:277px;height:18px;background:linear-gradient(180deg,#e6e9ee 0%,#e4e7ed 33%,#dbdfe7 38%,#dde1e8 60%,#e9ecf1 100%);"></div>
<div class="a" style="left:371px;top:0px;width:1px;height:18px;background:#b9bcc2;"></div>
<div class="a" style="left:372px;top:0px;width:74px;height:18px;background:linear-gradient(180deg,#e6e9ee 0%,#e4e7ed 33%,#dbdfe7 38%,#dde1e8 60%,#e9ecf1 100%);"></div>
<div class="a" style="left:446px;top:0px;width:1px;height:18px;background:#b9bcc2;"></div>
<div class="a" style="left:447px;top:0px;width:104px;height:18px;background:linear-gradient(180deg,#e6e9ee 0%,#e4e7ed 33%,#dbdfe7 38%,#dde1e8 60%,#e9ecf1 100%);"></div>
<div class="a" style="left:551px;top:0px;width:1px;height:18px;background:#b9bcc2;"></div>
<div class="a" style="left:552px;top:0px;width:104px;height:18px;background:linear-gradient(180deg,#e6e9ee 0%,#e4e7ed 33%,#dbdfe7 38%,#dde1e8 60%,#e9ecf1 100%);"></div>
<div class="a" style="left:656px;top:0px;width:1px;height:18px;background:#b9bcc2;"></div>
<div class="a" style="left:657px;top:0px;width:174px;height:18px;background:linear-gradient(180deg,#e6e9ee 0%,#e4e7ed 33%,#dbdfe7 38%,#dde1e8 60%,#e9ecf1 100%);"></div>
<div class="a" style="left:831px;top:0px;width:1px;height:18px;background:#b9bcc2;"></div>
<div class="a" style="left:35px;top:0px;width:1px;height:18px;background:#b9bcc2;"></div>
<div class="a" style="left:0px;top:18px;width:832px;height:1px;background:#a6a6a6;"></div>
<div class="a" style="left:0px;top:19px;width:832px;height:1px;background:#fff;"></div>
<div class="t" style="left:98px;top:-4.5px;font-size:16px;color:#000;">Module</div>
<div class="t" style="left:376px;top:-4.5px;font-size:16px;color:#000;">Slot</div>
<div class="t" style="left:451px;top:-4.5px;font-size:16px;color:#000;">I address</div>
<div class="t" style="left:556px;top:-4.5px;font-size:16px;color:#000;">Q address</div>
<div class="t" style="left:662px;top:-4.5px;font-size:16px;color:#000;">Type</div>
<div class="t" style="left:68px;top:-4px;font-size:16px;color:#000;">...</div>
<svg style="left:38px;top:-6px" width="24" height="24" viewBox="0 0 24 24"><path d="M13.2 23.5 V14 L17.4 5 H21 V7.500 L18 14.500 V23.5 Z" fill="#4fa83a"/><path d="M8.9 23.5 V13.5 L12.5 5 H16 L13.4 13.800 V23.5 Z" fill="#f5e643"/><path d="M0 0 V8 Q0.300 10.5 3.2 13.5 V23.5 H8.9 V13.5 Q11.700 10.5 12 8 V0 H9 V5.500 A3.100 3 0 0 1 2.800 5.500 V0 Z" fill="#c32a20"/><path d="M3.200 22.500 H8.9 V23.500 H3.200 Z" fill="#9c1c14"/><path d="M8.900 22.500 H13.300 V23.500 H8.900 Z" fill="#c8a828"/><path d="M13.300 22.500 H18 V23.500 H13.300 Z" fill="#3a862a"/></svg>
<div class="a" style="left:0px;top:20px;width:35px;height:27px;background:#cbcbcb;"></div>
<div class="a" style="left:35px;top:20px;width:1px;height:27px;background:#bdbdbd;"></div>
<div class="a" style="left:36px;top:20px;width:27px;height:27px;background:#e1e1e1;"></div>
<div class="a" style="left:64px;top:20px;width:29px;height:27px;background:#e1e1e1;"></div>
<div class="a" style="left:94px;top:20px;width:277px;height:27px;background:#e1e1e1;"></div>
<div class="a" style="left:372px;top:20px;width:74px;height:27px;background:#e1e1e1;"></div>
<div class="a" style="left:447px;top:20px;width:104px;height:27px;background:#e1e1e1;"></div>
<div class="a" style="left:552px;top:20px;width:104px;height:27px;background:#e1e1e1;"></div>
<div class="a" style="left:657px;top:20px;width:174px;height:27px;background:#e1e1e1;"></div>
<div class="t" style="left:379px;top:23.5px;font-size:16px;color:#000;">103</div>
<div class="a" style="left:0px;top:48px;width:35px;height:27px;background:#cbcbcb;"></div>
<div class="a" style="left:35px;top:48px;width:1px;height:27px;background:#bdbdbd;"></div>
<div class="a" style="left:36px;top:48px;width:27px;height:27px;background:#e1e1e1;"></div>
<div class="a" style="left:64px;top:48px;width:29px;height:27px;background:#e1e1e1;"></div>
<div class="a" style="left:94px;top:48px;width:277px;height:27px;background:#e1e1e1;"></div>
<div class="a" style="left:372px;top:48px;width:74px;height:27px;background:#e1e1e1;"></div>
<div class="a" style="left:447px;top:48px;width:104px;height:27px;background:#e1e1e1;"></div>
<div class="a" style="left:552px;top:48px;width:104px;height:27px;background:#e1e1e1;"></div>
<div class="a" style="left:657px;top:48px;width:174px;height:27px;background:#e1e1e1;"></div>
<div class="t" style="left:379px;top:51.5px;font-size:16px;color:#000;">102</div>
<div class="a" style="left:0px;top:76px;width:35px;height:27px;background:#cbcbcb;"></div>
<div class="a" style="left:35px;top:76px;width:1px;height:27px;background:#bdbdbd;"></div>
<div class="a" style="left:36px;top:76px;width:27px;height:27px;background:#e1e1e1;"></div>
<div class="a" style="left:64px;top:76px;width:29px;height:27px;background:#e1e1e1;"></div>
<div class="a" style="left:94px;top:76px;width:277px;height:27px;background:#e1e1e1;"></div>
<div class="a" style="left:372px;top:76px;width:74px;height:27px;background:#e1e1e1;"></div>
<div class="a" style="left:447px;top:76px;width:104px;height:27px;background:#e1e1e1;"></div>
<div class="a" style="left:552px;top:76px;width:104px;height:27px;background:#e1e1e1;"></div>
<div class="a" style="left:657px;top:76px;width:174px;height:27px;background:#e1e1e1;"></div>
<div class="t" style="left:379px;top:79.5px;font-size:16px;color:#000;">101</div>
<div class="a" style="left:0px;top:104px;width:35px;height:27px;background:#cbcbcb;"></div>
<div class="a" style="left:35px;top:104px;width:1px;height:27px;background:#bdbdbd;"></div>
<div class="a" style="left:36px;top:104px;width:27px;height:27px;background:#e1e1e1;"></div>
<div class="a" style="left:64px;top:104px;width:29px;height:27px;background:#e1e1e1;"></div>
<div class="a" style="left:94px;top:104px;width:277px;height:27px;background:#e1e1e1;"></div>
<div class="a" style="left:372px;top:104px;width:74px;height:27px;background:#e1e1e1;"></div>
<div class="a" style="left:447px;top:104px;width:104px;height:27px;background:#e1e1e1;"></div>
<div class="a" style="left:552px;top:104px;width:104px;height:27px;background:#e1e1e1;"></div>
<div class="a" style="left:657px;top:104px;width:174px;height:27px;background:#e1e1e1;"></div>
<div class="a" style="left:38px;top:107px;width:21px;height:21px;background:linear-gradient(160deg,#5dba47 0%,#56b03f 45%,#4a9c31 100%);box-shadow:1px 1px 1px rgba(0,0,0,.22),inset 0 -1px 0 rgba(40,120,20,.5)"><svg width="21" height="21" viewBox="0 0 21 21" style="left:0;top:0"><path d="M1.4 9.2 L2.9 7.3 L8.2 11.9 L16.7 1.9 L19.1 3.7 L8.4 16.6 Z" fill="#fff"/></svg></div>
<svg style="left:101px;top:112.5px" width="13" height="8"><path d="M0 0.5 H12.5 L6.25 7 Z" fill="#000"/></svg>
<div class="t" style="left:128px;top:107.5px;font-size:16px;color:#000;letter-spacing:0.25px">PLC_MEGALOS_PINAKAS</div>
<div class="t" style="left:379px;top:107.5px;font-size:16px;color:#000;">1</div>
<div class="t" style="left:663px;top:107.5px;font-size:16px;color:#000;">CPU 1214C DC/DC/...</div>
<div class="a" style="left:0px;top:132px;width:35px;height:27px;background:#cbcbcb;"></div>
<div class="a" style="left:35px;top:132px;width:1px;height:27px;background:#bdbdbd;"></div>
<div class="a" style="left:36px;top:132px;width:27px;height:27px;background:#e1e1e1;"></div>
<div class="a" style="left:64px;top:132px;width:29px;height:27px;background:#e1e1e1;"></div>
<div class="a" style="left:94px;top:132px;width:277px;height:27px;background:#e1e1e1;"></div>
<div class="a" style="left:372px;top:132px;width:74px;height:27px;background:#e1e1e1;"></div>
<div class="a" style="left:447px;top:132px;width:104px;height:27px;background:#e1e1e1;"></div>
<div class="a" style="left:552px;top:132px;width:104px;height:27px;background:#e1e1e1;"></div>
<div class="a" style="left:657px;top:132px;width:174px;height:27px;background:#e1e1e1;"></div>
<div class="a" style="left:38px;top:135px;width:21px;height:21px;background:linear-gradient(160deg,#5dba47 0%,#56b03f 45%,#4a9c31 100%);box-shadow:1px 1px 1px rgba(0,0,0,.22),inset 0 -1px 0 rgba(40,120,20,.5)"><svg width="21" height="21" viewBox="0 0 21 21" style="left:0;top:0"><path d="M1.4 9.2 L2.9 7.3 L8.2 11.9 L16.7 1.9 L19.1 3.7 L8.4 16.6 Z" fill="#fff"/></svg></div>
<div class="t" style="left:155px;top:135.5px;font-size:16px;color:#000;letter-spacing:0.25px">DI 14/DQ 10_1</div>
<div class="t" style="left:379px;top:135.5px;font-size:16px;color:#000;">1 1</div>
<div class="t" style="left:454px;top:135.5px;font-size:16px;color:#000;">0...1</div>
<div class="t" style="left:559px;top:135.5px;font-size:16px;color:#000;">0...1</div>
<div class="t" style="left:663px;top:135.5px;font-size:16px;color:#000;">DI 14/DQ 10</div>
<div class="a" style="left:0px;top:160px;width:35px;height:27px;background:#cbcbcb;"></div>
<div class="a" style="left:35px;top:160px;width:1px;height:27px;background:#bdbdbd;"></div>
<div class="a" style="left:36px;top:160px;width:27px;height:27px;background:#e1e1e1;"></div>
<div class="a" style="left:64px;top:160px;width:29px;height:27px;background:#e1e1e1;"></div>
<div class="a" style="left:94px;top:160px;width:277px;height:27px;background:#e1e1e1;"></div>
<div class="a" style="left:372px;top:160px;width:74px;height:27px;background:#e1e1e1;"></div>
<div class="a" style="left:447px;top:160px;width:104px;height:27px;background:#e1e1e1;"></div>
<div class="a" style="left:552px;top:160px;width:104px;height:27px;background:#e1e1e1;"></div>
<div class="a" style="left:657px;top:160px;width:174px;height:27px;background:#e1e1e1;"></div>
<div class="a" style="left:38px;top:163px;width:21px;height:21px;background:linear-gradient(160deg,#5dba47 0%,#56b03f 45%,#4a9c31 100%);box-shadow:1px 1px 1px rgba(0,0,0,.22),inset 0 -1px 0 rgba(40,120,20,.5)"><svg width="21" height="21" viewBox="0 0 21 21" style="left:0;top:0"><path d="M1.4 9.2 L2.9 7.3 L8.2 11.9 L16.7 1.9 L19.1 3.7 L8.4 16.6 Z" fill="#fff"/></svg></div>
<div class="t" style="left:155px;top:163.5px;font-size:16px;color:#000;letter-spacing:-0.15px">AI 2_1</div>
<div class="t" style="left:379px;top:163.5px;font-size:16px;color:#000;">1 2</div>
<div class="t" style="left:454px;top:163.5px;font-size:16px;color:#000;">64...67</div>
<div class="t" style="left:663px;top:163.5px;font-size:16px;color:#000;">AI 2</div>
<div class="a" style="left:0px;top:188px;width:35px;height:27px;background:#cbcbcb;"></div>
<div class="a" style="left:35px;top:188px;width:1px;height:27px;background:#bdbdbd;"></div>
<div class="a" style="left:36px;top:188px;width:27px;height:27px;background:#e1e1e1;"></div>
<div class="a" style="left:64px;top:188px;width:29px;height:27px;background:#e1e1e1;"></div>
<div class="a" style="left:94px;top:188px;width:277px;height:27px;background:#e1e1e1;"></div>
<div class="a" style="left:372px;top:188px;width:74px;height:27px;background:#e1e1e1;"></div>
<div class="a" style="left:447px;top:188px;width:104px;height:27px;background:#e1e1e1;"></div>
<div class="a" style="left:552px;top:188px;width:104px;height:27px;background:#e1e1e1;"></div>
<div class="a" style="left:657px;top:188px;width:174px;height:27px;background:#e1e1e1;"></div>
<div class="t" style="left:379px;top:191.5px;font-size:16px;color:#000;">1 3</div>
<div class="a" style="left:0px;top:216px;width:35px;height:27px;background:#cbcbcb;"></div>
<div class="a" style="left:35px;top:216px;width:1px;height:27px;background:#bdbdbd;"></div>
<div class="a" style="left:36px;top:216px;width:27px;height:27px;background:#e1e1e1;"></div>
<div class="a" style="left:64px;top:216px;width:29px;height:27px;background:#e1e1e1;"></div>
<div class="a" style="left:94px;top:216px;width:277px;height:27px;background:#e1e1e1;"></div>
<div class="a" style="left:372px;top:216px;width:74px;height:27px;background:#e1e1e1;"></div>
<div class="a" style="left:447px;top:216px;width:104px;height:27px;background:#e1e1e1;"></div>
<div class="a" style="left:552px;top:216px;width:104px;height:27px;background:#e1e1e1;"></div>
<div class="a" style="left:657px;top:216px;width:174px;height:27px;background:#e1e1e1;"></div>
<div class="a" style="left:38px;top:219px;width:21px;height:21px;background:linear-gradient(160deg,#5dba47 0%,#56b03f 45%,#4a9c31 100%);box-shadow:1px 1px 1px rgba(0,0,0,.22),inset 0 -1px 0 rgba(40,120,20,.5)"><svg width="21" height="21" viewBox="0 0 21 21" style="left:0;top:0"><path d="M1.4 9.2 L2.9 7.3 L8.2 11.9 L16.7 1.9 L19.1 3.7 L8.4 16.6 Z" fill="#fff"/></svg></div>
<div class="t" style="left:155px;top:219.5px;font-size:16px;color:#000;letter-spacing:0px">HSC_1</div>
<div class="t" style="left:379px;top:219.5px;font-size:16px;color:#000;">1 16</div>
<div class="t" style="left:454px;top:219.5px;font-size:16px;color:#000;">1000...10...</div>
<div class="t" style="left:663px;top:219.5px;font-size:16px;color:#000;">HSC</div>
<div class="a" style="left:0px;top:244px;width:35px;height:27px;background:#cbcbcb;"></div>
<div class="a" style="left:35px;top:244px;width:1px;height:27px;background:#bdbdbd;"></div>
<div class="a" style="left:36px;top:244px;width:27px;height:27px;background:#e1e1e1;"></div>
<div class="a" style="left:64px;top:244px;width:29px;height:27px;background:#e1e1e1;"></div>
<div class="a" style="left:94px;top:244px;width:277px;height:27px;background:#e1e1e1;"></div>
<div class="a" style="left:372px;top:244px;width:74px;height:27px;background:#e1e1e1;"></div>
<div class="a" style="left:447px;top:244px;width:104px;height:27px;background:#e1e1e1;"></div>
<div class="a" style="left:552px;top:244px;width:104px;height:27px;background:#e1e1e1;"></div>
<div class="a" style="left:657px;top:244px;width:174px;height:27px;background:#e1e1e1;"></div>
<div class="a" style="left:38px;top:247px;width:21px;height:21px;background:linear-gradient(160deg,#5dba47 0%,#56b03f 45%,#4a9c31 100%);box-shadow:1px 1px 1px rgba(0,0,0,.22),inset 0 -1px 0 rgba(40,120,20,.5)"><svg width="21" height="21" viewBox="0 0 21 21" style="left:0;top:0"><path d="M1.4 9.2 L2.9 7.3 L8.2 11.9 L16.7 1.9 L19.1 3.7 L8.4 16.6 Z" fill="#fff"/></svg></div>
<div class="t" style="left:155px;top:247.5px;font-size:16px;color:#000;letter-spacing:0px">HSC_2</div>
<div class="t" style="left:379px;top:247.5px;font-size:16px;color:#000;">1 17</div>
<div class="t" style="left:454px;top:247.5px;font-size:16px;color:#000;">1004...10...</div>
<div class="t" style="left:663px;top:247.5px;font-size:16px;color:#000;">HSC</div>
<div class="a" style="left:0px;top:272px;width:35px;height:27px;background:#cbcbcb;"></div>
<div class="a" style="left:35px;top:272px;width:1px;height:27px;background:#bdbdbd;"></div>
<div class="a" style="left:36px;top:272px;width:27px;height:27px;background:#e1e1e1;"></div>
<div class="a" style="left:64px;top:272px;width:29px;height:27px;background:#e1e1e1;"></div>
<div class="a" style="left:94px;top:272px;width:277px;height:27px;background:#e1e1e1;"></div>
<div class="a" style="left:372px;top:272px;width:74px;height:27px;background:#e1e1e1;"></div>
<div class="a" style="left:447px;top:272px;width:104px;height:27px;background:#e1e1e1;"></div>
<div class="a" style="left:552px;top:272px;width:104px;height:27px;background:#e1e1e1;"></div>
<div class="a" style="left:657px;top:272px;width:174px;height:27px;background:#e1e1e1;"></div>
<div class="a" style="left:38px;top:275px;width:21px;height:21px;background:linear-gradient(160deg,#5dba47 0%,#56b03f 45%,#4a9c31 100%);box-shadow:1px 1px 1px rgba(0,0,0,.22),inset 0 -1px 0 rgba(40,120,20,.5)"><svg width="21" height="21" viewBox="0 0 21 21" style="left:0;top:0"><path d="M1.4 9.2 L2.9 7.3 L8.2 11.9 L16.7 1.9 L19.1 3.7 L8.4 16.6 Z" fill="#fff"/></svg></div>
<div class="t" style="left:155px;top:275.5px;font-size:16px;color:#000;letter-spacing:0px">HSC_3</div>
<div class="t" style="left:379px;top:275.5px;font-size:16px;color:#000;">1 18</div>
<div class="t" style="left:454px;top:275.5px;font-size:16px;color:#000;">1008...10...</div>
<div class="t" style="left:663px;top:275.5px;font-size:16px;color:#000;">HSC</div>
<div class="a" style="left:0px;top:300px;width:35px;height:27px;background:#cbcbcb;"></div>
<div class="a" style="left:35px;top:300px;width:1px;height:27px;background:#bdbdbd;"></div>
<div class="a" style="left:36px;top:300px;width:27px;height:27px;background:#e1e1e1;"></div>
<div class="a" style="left:64px;top:300px;width:29px;height:27px;background:#e1e1e1;"></div>
<div class="a" style="left:94px;top:300px;width:277px;height:27px;background:#e1e1e1;"></div>
<div class="a" style="left:372px;top:300px;width:74px;height:27px;background:#e1e1e1;"></div>
<div class="a" style="left:447px;top:300px;width:104px;height:27px;background:#e1e1e1;"></div>
<div class="a" style="left:552px;top:300px;width:104px;height:27px;background:#e1e1e1;"></div>
<div class="a" style="left:657px;top:300px;width:174px;height:27px;background:#e1e1e1;"></div>
<div class="a" style="left:38px;top:303px;width:21px;height:21px;background:linear-gradient(160deg,#5dba47 0%,#56b03f 45%,#4a9c31 100%);box-shadow:1px 1px 1px rgba(0,0,0,.22),inset 0 -1px 0 rgba(40,120,20,.5)"><svg width="21" height="21" viewBox="0 0 21 21" style="left:0;top:0"><path d="M1.4 9.2 L2.9 7.3 L8.2 11.9 L16.7 1.9 L19.1 3.7 L8.4 16.6 Z" fill="#fff"/></svg></div>
<div class="t" style="left:155px;top:303.5px;font-size:16px;color:#000;letter-spacing:0px">HSC_4</div>
<div class="t" style="left:379px;top:303.5px;font-size:16px;color:#000;">1 19</div>
<div class="t" style="left:454px;top:303.5px;font-size:16px;color:#000;">1012...10...</div>
<div class="t" style="left:663px;top:303.5px;font-size:16px;color:#000;">HSC</div>
<div class="a" style="left:0px;top:328px;width:35px;height:27px;background:#cbcbcb;"></div>
<div class="a" style="left:35px;top:328px;width:1px;height:27px;background:#bdbdbd;"></div>
<div class="a" style="left:36px;top:328px;width:27px;height:27px;background:#e1e1e1;"></div>
<div class="a" style="left:64px;top:328px;width:29px;height:27px;background:#e1e1e1;"></div>
<div class="a" style="left:94px;top:328px;width:277px;height:27px;background:#e1e1e1;"></div>
<div class="a" style="left:372px;top:328px;width:74px;height:27px;background:#e1e1e1;"></div>
<div class="a" style="left:447px;top:328px;width:104px;height:27px;background:#e1e1e1;"></div>
<div class="a" style="left:552px;top:328px;width:104px;height:27px;background:#e1e1e1;"></div>
<div class="a" style="left:657px;top:328px;width:174px;height:27px;background:#e1e1e1;"></div>
<div class="a" style="left:38px;top:331px;width:21px;height:21px;background:linear-gradient(160deg,#5dba47 0%,#56b03f 45%,#4a9c31 100%);box-shadow:1px 1px 1px rgba(0,0,0,.22),inset 0 -1px 0 rgba(40,120,20,.5)"><svg width="21" height="21" viewBox="0 0 21 21" style="left:0;top:0"><path d="M1.4 9.2 L2.9 7.3 L8.2 11.9 L16.7 1.9 L19.1 3.7 L8.4 16.6 Z" fill="#fff"/></svg></div>
<div class="t" style="left:155px;top:331.5px;font-size:16px;color:#000;letter-spacing:0px">HSC_5</div>
<div class="t" style="left:379px;top:331.5px;font-size:16px;color:#000;">1 20</div>
<div class="t" style="left:454px;top:331.5px;font-size:16px;color:#000;">1016...10...</div>
<div class="t" style="left:663px;top:331.5px;font-size:16px;color:#000;">HSC</div>
<div class="a" style="left:0px;top:356px;width:35px;height:27px;background:#cbcbcb;"></div>
<div class="a" style="left:35px;top:356px;width:1px;height:27px;background:#bdbdbd;"></div>
<div class="a" style="left:36px;top:356px;width:27px;height:27px;background:#e1e1e1;"></div>
<div class="a" style="left:64px;top:356px;width:29px;height:27px;background:#e1e1e1;"></div>
<div class="a" style="left:94px;top:356px;width:277px;height:27px;background:#e1e1e1;"></div>
<div class="a" style="left:372px;top:356px;width:74px;height:27px;background:#e1e1e1;"></div>
<div class="a" style="left:447px;top:356px;width:104px;height:27px;background:#e1e1e1;"></div>
<div class="a" style="left:552px;top:356px;width:104px;height:27px;background:#e1e1e1;"></div>
<div class="a" style="left:657px;top:356px;width:174px;height:27px;background:#e1e1e1;"></div>
<div class="a" style="left:38px;top:359px;width:21px;height:21px;background:linear-gradient(160deg,#5dba47 0%,#56b03f 45%,#4a9c31 100%);box-shadow:1px 1px 1px rgba(0,0,0,.22),inset 0 -1px 0 rgba(40,120,20,.5)"><svg width="21" height="21" viewBox="0 0 21 21" style="left:0;top:0"><path d="M1.4 9.2 L2.9 7.3 L8.2 11.9 L16.7 1.9 L19.1 3.7 L8.4 16.6 Z" fill="#fff"/></svg></div>
<div class="t" style="left:155px;top:359.5px;font-size:16px;color:#000;letter-spacing:0px">HSC_6</div>
<div class="t" style="left:379px;top:359.5px;font-size:16px;color:#000;">1 21</div>
<div class="t" style="left:454px;top:359.5px;font-size:16px;color:#000;">1020...10...</div>
<div class="t" style="left:663px;top:359.5px;font-size:16px;color:#000;">HSC</div>
<div class="a" style="left:0px;top:384px;width:35px;height:27px;background:#cbcbcb;"></div>
<div class="a" style="left:35px;top:384px;width:1px;height:27px;background:#bdbdbd;"></div>
<div class="a" style="left:36px;top:384px;width:27px;height:27px;background:#e1e1e1;"></div>
<div class="a" style="left:64px;top:384px;width:29px;height:27px;background:#e1e1e1;"></div>
<div class="a" style="left:94px;top:384px;width:277px;height:27px;background:#e1e1e1;"></div>
<div class="a" style="left:372px;top:384px;width:74px;height:27px;background:#e1e1e1;"></div>
<div class="a" style="left:447px;top:384px;width:104px;height:27px;background:#e1e1e1;"></div>
<div class="a" style="left:552px;top:384px;width:104px;height:27px;background:#e1e1e1;"></div>
<div class="a" style="left:657px;top:384px;width:174px;height:27px;background:#e1e1e1;"></div>
<div class="a" style="left:38px;top:387px;width:21px;height:21px;background:linear-gradient(160deg,#5dba47 0%,#56b03f 45%,#4a9c31 100%);box-shadow:1px 1px 1px rgba(0,0,0,.22),inset 0 -1px 0 rgba(40,120,20,.5)"><svg width="21" height="21" viewBox="0 0 21 21" style="left:0;top:0"><path d="M1.4 9.2 L2.9 7.3 L8.2 11.9 L16.7 1.9 L19.1 3.7 L8.4 16.6 Z" fill="#fff"/></svg></div>
<div class="t" style="left:155px;top:387.5px;font-size:16px;color:#000;letter-spacing:0.4px">Pulse_1</div>
<div class="t" style="left:379px;top:387.5px;font-size:16px;color:#000;">1 32</div>
<div class="t" style="left:559px;top:387.5px;font-size:16px;color:#000;">1000...10...</div>
<div class="t" style="left:663px;top:387.5px;font-size:16px;color:#000;">Pulse generator (P...</div>
<div class="a" style="left:0px;top:412px;width:35px;height:27px;background:#cbcbcb;"></div>
<div class="a" style="left:35px;top:412px;width:1px;height:27px;background:#bdbdbd;"></div>
<div class="a" style="left:36px;top:412px;width:27px;height:27px;background:#e1e1e1;"></div>
<div class="a" style="left:64px;top:412px;width:29px;height:27px;background:#e1e1e1;"></div>
<div class="a" style="left:94px;top:412px;width:277px;height:27px;background:#e1e1e1;"></div>
<div class="a" style="left:372px;top:412px;width:74px;height:27px;background:#e1e1e1;"></div>
<div class="a" style="left:447px;top:412px;width:104px;height:27px;background:#e1e1e1;"></div>
<div class="a" style="left:552px;top:412px;width:104px;height:27px;background:#e1e1e1;"></div>
<div class="a" style="left:657px;top:412px;width:174px;height:27px;background:#e1e1e1;"></div>
<div class="a" style="left:38px;top:415px;width:21px;height:21px;background:linear-gradient(160deg,#5dba47 0%,#56b03f 45%,#4a9c31 100%);box-shadow:1px 1px 1px rgba(0,0,0,.22),inset 0 -1px 0 rgba(40,120,20,.5)"><svg width="21" height="21" viewBox="0 0 21 21" style="left:0;top:0"><path d="M1.4 9.2 L2.9 7.3 L8.2 11.9 L16.7 1.9 L19.1 3.7 L8.4 16.6 Z" fill="#fff"/></svg></div>
<div class="t" style="left:155px;top:415.5px;font-size:16px;color:#000;letter-spacing:0.4px">Pulse_2</div>
<div class="t" style="left:379px;top:415.5px;font-size:16px;color:#000;">1 33</div>
<div class="t" style="left:559px;top:415.5px;font-size:16px;color:#000;">1002...10...</div>
<div class="t" style="left:663px;top:415.5px;font-size:16px;color:#000;">Pulse generator (P...</div>
<div class="a" style="left:0px;top:440px;width:35px;height:27px;background:#cbcbcb;"></div>
<div class="a" style="left:35px;top:440px;width:1px;height:27px;background:#bdbdbd;"></div>
<div class="a" style="left:36px;top:440px;width:27px;height:27px;background:#e1e1e1;"></div>
<div class="a" style="left:64px;top:440px;width:29px;height:27px;background:#e1e1e1;"></div>
<div class="a" style="left:94px;top:440px;width:277px;height:27px;background:#e1e1e1;"></div>
<div class="a" style="left:372px;top:440px;width:74px;height:27px;background:#e1e1e1;"></div>
<div class="a" style="left:447px;top:440px;width:104px;height:27px;background:#e1e1e1;"></div>
<div class="a" style="left:552px;top:440px;width:104px;height:27px;background:#e1e1e1;"></div>
<div class="a" style="left:657px;top:440px;width:174px;height:27px;background:#e1e1e1;"></div>
<div class="a" style="left:38px;top:443px;width:21px;height:21px;background:linear-gradient(160deg,#5dba47 0%,#56b03f 45%,#4a9c31 100%);box-shadow:1px 1px 1px rgba(0,0,0,.22),inset 0 -1px 0 rgba(40,120,20,.5)"><svg width="21" height="21" viewBox="0 0 21 21" style="left:0;top:0"><path d="M1.4 9.2 L2.9 7.3 L8.2 11.9 L16.7 1.9 L19.1 3.7 L8.4 16.6 Z" fill="#fff"/></svg></div>
<div class="t" style="left:155px;top:443.5px;font-size:16px;color:#000;letter-spacing:0.4px">Pulse_3</div>
<div class="t" style="left:379px;top:443.5px;font-size:16px;color:#000;">1 34</div>
<div class="t" style="left:559px;top:443.5px;font-size:16px;color:#000;">1004...10...</div>
<div class="t" style="left:663px;top:443.5px;font-size:16px;color:#000;">Pulse generator (P...</div>
<div class="a" style="left:0px;top:468px;width:35px;height:27px;background:#cbcbcb;"></div>
<div class="a" style="left:35px;top:468px;width:1px;height:27px;background:#bdbdbd;"></div>
<div class="a" style="left:36px;top:468px;width:27px;height:27px;background:#e1e1e1;"></div>
<div class="a" style="left:64px;top:468px;width:29px;height:27px;background:#e1e1e1;"></div>
<div class="a" style="left:94px;top:468px;width:277px;height:27px;background:#e1e1e1;"></div>
<div class="a" style="left:372px;top:468px;width:74px;height:27px;background:#e1e1e1;"></div>
<div class="a" style="left:447px;top:468px;width:104px;height:27px;background:#e1e1e1;"></div>
<div class="a" style="left:552px;top:468px;width:104px;height:27px;background:#e1e1e1;"></div>
<div class="a" style="left:657px;top:468px;width:174px;height:27px;background:#e1e1e1;"></div>
<div class="a" style="left:38px;top:471px;width:21px;height:21px;background:linear-gradient(160deg,#5dba47 0%,#56b03f 45%,#4a9c31 100%);box-shadow:1px 1px 1px rgba(0,0,0,.22),inset 0 -1px 0 rgba(40,120,20,.5)"><svg width="21" height="21" viewBox="0 0 21 21" style="left:0;top:0"><path d="M1.4 9.2 L2.9 7.3 L8.2 11.9 L16.7 1.9 L19.1 3.7 L8.4 16.6 Z" fill="#fff"/></svg></div>
<div class="t" style="left:155px;top:471.5px;font-size:16px;color:#000;letter-spacing:0.4px">Pulse_4</div>
<div class="t" style="left:379px;top:471.5px;font-size:16px;color:#000;">1 35</div>
<div class="t" style="left:559px;top:471.5px;font-size:16px;color:#000;">1006...1007</div>
<div class="t" style="left:663px;top:471.5px;font-size:16px;color:#000;">Pulse generator (P...</div>
<div class="a" style="left:0px;top:496px;width:35px;height:27px;background:#c1c9d5;"></div>
<div class="a" style="left:35px;top:496px;width:1px;height:27px;background:#b4bcc8;"></div>
<div class="a" style="left:36px;top:496px;width:27px;height:27px;background:#d3d6dc;"></div>
<div class="a" style="left:64px;top:496px;width:29px;height:27px;background:#d3d6dc;"></div>
<div class="a" style="left:94px;top:496px;width:277px;height:27px;background:#d3d6dc;"></div>
<div class="a" style="left:372px;top:496px;width:74px;height:27px;background:#d3d6dc;"></div>
<div class="a" style="left:447px;top:496px;width:104px;height:27px;background:#d3d6dc;"></div>
<div class="a" style="left:552px;top:496px;width:104px;height:27px;background:#d3d6dc;"></div>
<div class="a" style="left:657px;top:496px;width:174px;height:27px;background:#d3d6dc;"></div>
<div class="a" style="left:0px;top:522px;width:832px;height:1px;background:#c2cad6;"></div>
<div class="a" style="left:38px;top:499px;width:21px;height:21px;background:linear-gradient(160deg,#5dba47 0%,#56b03f 45%,#4a9c31 100%);box-shadow:1px 1px 1px rgba(0,0,0,.22),inset 0 -1px 0 rgba(40,120,20,.5)"><svg width="21" height="21" viewBox="0 0 21 21" style="left:0;top:0"><path d="M1.4 9.2 L2.9 7.3 L8.2 11.9 L16.7 1.9 L19.1 3.7 L8.4 16.6 Z" fill="#fff"/></svg></div>
<svg style="left:131px;top:503px" width="8" height="13"><path d="M0.5 0 V12.5 L7 6.25 Z" fill="#000"/></svg>
<div class="t" style="left:155px;top:499.5px;font-size:16px;color:#000;letter-spacing:0.1px">PROFINET interface_1</div>
<div class="t" style="left:379px;top:499.5px;font-size:16px;color:#000;">1 X1</div>
<div class="t" style="left:663px;top:499.5px;font-size:16px;color:#000;">PROFINET interface</div>
<div class="a" style="left:0px;top:524px;width:35px;height:27px;background:#cbcbcb;"></div>
<div class="a" style="left:35px;top:524px;width:1px;height:27px;background:#bdbdbd;"></div>
<div class="a" style="left:36px;top:524px;width:27px;height:27px;background:#e1e1e1;"></div>
<div class="a" style="left:64px;top:524px;width:29px;height:27px;background:#e1e1e1;"></div>
<div class="a" style="left:94px;top:524px;width:277px;height:27px;background:#e1e1e1;"></div>
<div class="a" style="left:372px;top:524px;width:74px;height:27px;background:#e1e1e1;"></div>
<div class="a" style="left:447px;top:524px;width:104px;height:27px;background:#e1e1e1;"></div>
<div class="a" style="left:552px;top:524px;width:104px;height:27px;background:#e1e1e1;"></div>
<div class="a" style="left:657px;top:524px;width:174px;height:27px;background:#e1e1e1;"></div>
<div class="a" style="left:38px;top:527px;width:21px;height:21px;background:linear-gradient(160deg,#5dba47 0%,#56b03f 45%,#4a9c31 100%);box-shadow:1px 1px 1px rgba(0,0,0,.22),inset 0 -1px 0 rgba(40,120,20,.5)"><svg width="21" height="21" viewBox="0 0 21 21" style="left:0;top:0"><path d="M1.4 9.2 L2.9 7.3 L8.2 11.9 L16.7 1.9 L19.1 3.7 L8.4 16.6 Z" fill="#fff"/></svg></div>
<div class="t" style="left:128px;top:527.5px;font-size:16px;color:#000;letter-spacing:-0.15px">DI 16x24VDC_1</div>
<div class="t" style="left:379px;top:527.5px;font-size:16px;color:#000;">2</div>
<div class="t" style="left:454px;top:527.5px;font-size:16px;color:#000;">8...9</div>
<div class="t" style="left:663px;top:527.5px;font-size:16px;color:#000;">SM 1221 DI16 x 24...</div>
<div class="a" style="left:0px;top:552px;width:35px;height:27px;background:#cbcbcb;"></div>
<div class="a" style="left:35px;top:552px;width:1px;height:27px;background:#bdbdbd;"></div>
<div class="a" style="left:36px;top:552px;width:27px;height:27px;background:#e1e1e1;"></div>
<div class="a" style="left:64px;top:552px;width:29px;height:27px;background:#e1e1e1;"></div>
<div class="a" style="left:94px;top:552px;width:277px;height:27px;background:#e1e1e1;"></div>
<div class="a" style="left:372px;top:552px;width:74px;height:27px;background:#e1e1e1;"></div>
<div class="a" style="left:447px;top:552px;width:104px;height:27px;background:#e1e1e1;"></div>
<div class="a" style="left:552px;top:552px;width:104px;height:27px;background:#e1e1e1;"></div>
<div class="a" style="left:657px;top:552px;width:174px;height:27px;background:#e1e1e1;"></div>
<div class="a" style="left:38px;top:555px;width:21px;height:21px;background:linear-gradient(160deg,#5dba47 0%,#56b03f 45%,#4a9c31 100%);box-shadow:1px 1px 1px rgba(0,0,0,.22),inset 0 -1px 0 rgba(40,120,20,.5)"><svg width="21" height="21" viewBox="0 0 21 21" style="left:0;top:0"><path d="M1.4 9.2 L2.9 7.3 L8.2 11.9 L16.7 1.9 L19.1 3.7 L8.4 16.6 Z" fill="#fff"/></svg></div>
<div class="t" style="left:128px;top:555.5px;font-size:16px;color:#000;letter-spacing:-0.15px">DI 8/DQ 8x24VDC_1</div>
<div class="t" style="left:379px;top:555.5px;font-size:16px;color:#000;">3</div>
<div class="t" style="left:454px;top:555.5px;font-size:16px;color:#000;">12</div>
<div class="t" style="left:559px;top:555.5px;font-size:16px;color:#000;">12</div>
<div class="t" style="left:663px;top:555.5px;font-size:16px;color:#000;">SM 1223 DI8/DQ8 ...</div>
<div class="a" style="left:0px;top:580px;width:35px;height:27px;background:#cbcbcb;"></div>
<div class="a" style="left:35px;top:580px;width:1px;height:27px;background:#bdbdbd;"></div>
<div class="a" style="left:36px;top:580px;width:27px;height:27px;background:#e1e1e1;"></div>
<div class="a" style="left:64px;top:580px;width:29px;height:27px;background:#e1e1e1;"></div>
<div class="a" style="left:94px;top:580px;width:277px;height:27px;background:#e1e1e1;"></div>
<div class="a" style="left:372px;top:580px;width:74px;height:27px;background:#e1e1e1;"></div>
<div class="a" style="left:447px;top:580px;width:104px;height:27px;background:#e1e1e1;"></div>
<div class="a" style="left:552px;top:580px;width:104px;height:27px;background:#e1e1e1;"></div>
<div class="a" style="left:657px;top:580px;width:174px;height:27px;background:#e1e1e1;"></div>
<div class="a" style="left:38px;top:583px;width:21px;height:21px;background:linear-gradient(160deg,#5dba47 0%,#56b03f 45%,#4a9c31 100%);box-shadow:1px 1px 1px rgba(0,0,0,.22),inset 0 -1px 0 rgba(40,120,20,.5)"><svg width="21" height="21" viewBox="0 0 21 21" style="left:0;top:0"><path d="M1.4 9.2 L2.9 7.3 L8.2 11.9 L16.7 1.9 L19.1 3.7 L8.4 16.6 Z" fill="#fff"/></svg></div>
<div class="t" style="left:128px;top:583.5px;font-size:16px;color:#000;letter-spacing:-0.15px">AI 8x13BIT_1</div>
<div class="t" style="left:379px;top:583.5px;font-size:16px;color:#000;">4</div>
<div class="t" style="left:454px;top:583.5px;font-size:16px;color:#000;">128...143</div>
<div class="t" style="left:663px;top:583.5px;font-size:16px;color:#000;">SM 1231 AI8</div>
<div class="a" style="left:0px;top:608px;width:35px;height:27px;background:#cbcbcb;"></div>
<div class="a" style="left:35px;top:608px;width:1px;height:27px;background:#bdbdbd;"></div>
<div class="a" style="left:36px;top:608px;width:27px;height:27px;background:#e1e1e1;"></div>
<div class="a" style="left:64px;top:608px;width:29px;height:27px;background:#e1e1e1;"></div>
<div class="a" style="left:94px;top:608px;width:277px;height:27px;background:#e1e1e1;"></div>
<div class="a" style="left:372px;top:608px;width:74px;height:27px;background:#e1e1e1;"></div>
<div class="a" style="left:447px;top:608px;width:104px;height:27px;background:#e1e1e1;"></div>
<div class="a" style="left:552px;top:608px;width:104px;height:27px;background:#e1e1e1;"></div>
<div class="a" style="left:657px;top:608px;width:174px;height:27px;background:#e1e1e1;"></div>
<div class="t" style="left:379px;top:611.5px;font-size:16px;color:#000;">5</div>
<div class="a" style="left:0px;top:636px;width:35px;height:27px;background:#cbcbcb;"></div>
<div class="a" style="left:35px;top:636px;width:1px;height:27px;background:#bdbdbd;"></div>
<div class="a" style="left:36px;top:636px;width:27px;height:27px;background:#e1e1e1;"></div>
<div class="a" style="left:64px;top:636px;width:29px;height:27px;background:#e1e1e1;"></div>
<div class="a" style="left:94px;top:636px;width:277px;height:27px;background:#e1e1e1;"></div>
<div class="a" style="left:372px;top:636px;width:74px;height:27px;background:#e1e1e1;"></div>
<div class="a" style="left:447px;top:636px;width:104px;height:27px;background:#e1e1e1;"></div>
<div class="a" style="left:552px;top:636px;width:104px;height:27px;background:#e1e1e1;"></div>
<div class="a" style="left:657px;top:636px;width:174px;height:27px;background:#e1e1e1;"></div>
<div class="t" style="left:379px;top:639.5px;font-size:16px;color:#000;">6</div>
<div class="a" style="left:0px;top:664px;width:35px;height:27px;background:#cbcbcb;"></div>
<div class="a" style="left:35px;top:664px;width:1px;height:27px;background:#bdbdbd;"></div>
<div class="a" style="left:36px;top:664px;width:27px;height:27px;background:#e1e1e1;"></div>
<div class="a" style="left:64px;top:664px;width:29px;height:27px;background:#e1e1e1;"></div>
<div class="a" style="left:94px;top:664px;width:277px;height:27px;background:#e1e1e1;"></div>
<div class="a" style="left:372px;top:664px;width:74px;height:27px;background:#e1e1e1;"></div>
<div class="a" style="left:447px;top:664px;width:104px;height:27px;background:#e1e1e1;"></div>
<div class="a" style="left:552px;top:664px;width:104px;height:27px;background:#e1e1e1;"></div>
<div class="a" style="left:657px;top:664px;width:174px;height:27px;background:#e1e1e1;"></div>
<div class="t" style="left:379px;top:667.5px;font-size:16px;color:#000;">7</div>
<div class="a" style="left:0px;top:692px;width:35px;height:27px;background:#cbcbcb;"></div>
<div class="a" style="left:35px;top:692px;width:1px;height:27px;background:#bdbdbd;"></div>
<div class="a" style="left:36px;top:692px;width:27px;height:27px;background:#e1e1e1;"></div>
<div class="a" style="left:64px;top:692px;width:29px;height:27px;background:#e1e1e1;"></div>
<div class="a" style="left:94px;top:692px;width:277px;height:27px;background:#e1e1e1;"></div>
<div class="a" style="left:372px;top:692px;width:74px;height:27px;background:#e1e1e1;"></div>
<div class="a" style="left:447px;top:692px;width:104px;height:27px;background:#e1e1e1;"></div>
<div class="a" style="left:552px;top:692px;width:104px;height:27px;background:#e1e1e1;"></div>
<div class="a" style="left:657px;top:692px;width:174px;height:27px;background:#e1e1e1;"></div>
<div class="t" style="left:379px;top:695.5px;font-size:16px;color:#000;">8</div>
<div class="a" style="left:0px;top:720px;width:35px;height:27px;background:#cbcbcb;"></div>
<div class="a" style="left:35px;top:720px;width:1px;height:27px;background:#bdbdbd;"></div>
<div class="a" style="left:36px;top:720px;width:27px;height:27px;background:#e1e1e1;"></div>
<div class="a" style="left:64px;top:720px;width:29px;height:27px;background:#e1e1e1;"></div>
<div class="a" style="left:94px;top:720px;width:277px;height:27px;background:#e1e1e1;"></div>
<div class="a" style="left:372px;top:720px;width:74px;height:27px;background:#e1e1e1;"></div>
<div class="a" style="left:447px;top:720px;width:104px;height:27px;background:#e1e1e1;"></div>
<div class="a" style="left:552px;top:720px;width:104px;height:27px;background:#e1e1e1;"></div>
<div class="a" style="left:657px;top:720px;width:174px;height:27px;background:#e1e1e1;"></div>
<div class="t" style="left:379px;top:723.5px;font-size:16px;color:#000;">9</div>
<div class="a" style="left:831px;top:0px;width:1px;height:730px;background:#9e9e9e;"></div>
<div class="a" style="left:832px;top:0px;width:7px;height:730px;background:#c3c3c3;"></div>
<div class="a" style="left:832px;top:0px;width:7px;height:19px;background:linear-gradient(180deg,#e2e2e2,#cfcfcf);"></div>
<div class="a" style="left:832px;top:21px;width:26px;height:26px;background:linear-gradient(180deg,#f2f2f2,#d6d6d6);border:1px solid #8e8e8e;box-shadow:inset 0 0 0 1px #fff;"></div>
<div class="a" style="left:832px;top:49px;width:26px;height:300px;background:linear-gradient(180deg,#f2f2f2,#d6d6d6);border:1px solid #8e8e8e;box-shadow:inset 0 0 0 1px #fff;"></div>
<div class="a" style="left:832px;top:704px;width:26px;height:26px;background:linear-gradient(180deg,#f2f2f2,#d6d6d6);border:1px solid #8e8e8e;box-shadow:inset 0 0 0 1px #fff;"></div>
<div class="a" style="left:837px;top:714px;width:2px;height:2px;background:#555;"></div>
<div class="a" style="left:837px;top:35px;width:2px;height:2px;background:#555;"></div>
</div>
<div class="a" style="left:1001px;top:730px;width:839px;height:27px;background:#c3c3c3;"></div>
<div class="a" style="left:1001px;top:730px;width:36px;height:27px;background:#cbcbcb;"></div>
<div class="a" style="left:1833px;top:730px;width:7px;height:27px;background:#dadada;"></div>
<div class="a" style="left:1037px;top:731px;width:27px;height:26px;background:linear-gradient(180deg,#f2f2f2,#d6d6d6);border:1px solid #8e8e8e;box-shadow:inset 0 0 0 1px #fff;"></div>
<svg style="left:0;top:0" width="1" height="1"><path d="M1052.5 739.0 L1047.5 744 L1052.5 749.0" fill="none" stroke="#444" stroke-width="2"/></svg>
<div class="a" style="left:1065px;top:731px;width:632px;height:26px;background:linear-gradient(180deg,#f2f2f2,#d6d6d6);border:1px solid #8e8e8e;box-shadow:inset 0 0 0 1px #fff;"></div>
<div class="a" style="left:1376px;top:738px;width:1px;height:12px;background:#555;"></div>
<div class="a" style="left:1378px;top:738px;width:1px;height:12px;background:#555;"></div>
<div class="a" style="left:1380px;top:738px;width:1px;height:12px;background:#555;"></div>
<div class="a" style="left:1382px;top:738px;width:1px;height:12px;background:#555;"></div>
<div class="a" style="left:1805px;top:731px;width:27px;height:26px;background:linear-gradient(180deg,#f2f2f2,#d6d6d6);border:1px solid #8e8e8e;box-shadow:inset 0 0 0 1px #fff;"></div>
<svg style="left:0;top:0" width="1" height="1"><path d="M1816.0 737.5 L1822.0 743.5 L1816.0 749.5" fill="none" stroke="#444" stroke-width="2"/></svg>
<div class="a" style="left:0px;top:757px;width:1840px;height:3px;background:#1c1f31;"></div>
<div class="a" style="left:0px;top:760px;width:1840px;height:36px;background:#b0b0b0;"></div>
<div class="a" style="left:0px;top:796px;width:1840px;height:4px;background:#f0a030;"></div>
<div class="a" style="left:0px;top:800px;width:1840px;height:35px;background:#cdcdcd;"></div>
<div class="a" style="left:0px;top:835px;width:1840px;height:1px;background:#8c8c8c;"></div>
<div class="a" style="left:0px;top:836px;width:1840px;height:432px;background:#ebebeb;"></div>
<div class="t" style="left:-8px;top:766px;height:26px;line-height:26px;font-size:20.5px;color:#fff;letter-spacing:-0.55px;-webkit-text-stroke:0.3px #fff">PROFINET interface_1 [Module]</div>
<div class="a" style="left:1276px;top:764px;width:171px;height:3px;background:#f0a030;"></div>
<div class="a" style="left:1276px;top:767px;width:169px;height:33px;background:linear-gradient(180deg,#f2f2f2 0%,#ededed 45%,#e8e8e8 50%,#ebebeb 100%);border-left:1px solid #9a9a9a;border-right:1px solid #9a9a9a"></div>
<div class="t b" style="left:1313px;top:768px;height:24px;line-height:24px;font-size:20px;letter-spacing:-0.3px">Properties</div>
<div class="a" style="left:1447px;top:764px;width:115px;height:32px;background:linear-gradient(180deg,#eaeaea 0%,#e7e7e7 46%,#dbdbdb 50%,#dcdcdc 100%);border:1px solid #9a9a9a;border-bottom:none;box-shadow:inset 1px 1px 0 #f4f4f4"></div>
<div class="a" style="left:1564px;top:764px;width:185px;height:32px;background:linear-gradient(180deg,#eaeaea 0%,#e7e7e7 46%,#dbdbdb 50%,#dcdcdc 100%);border:1px solid #9a9a9a;border-bottom:none;box-shadow:inset 1px 1px 0 #f4f4f4"></div>
<div class="t" style="left:1484px;top:768px;height:24px;line-height:24px;font-size:20px;color:#505050;letter-spacing:0.3px">Info</div>
<div class="t" style="left:1601px;top:768px;height:24px;line-height:24px;font-size:20px;color:#505050;letter-spacing:-0.2px">Diagnostics</div>
<svg style="left:1280px;top:768px" width="24" height="24" viewBox="0 0 24 24"><rect x="0.5" y="0.5" width="19" height="21" fill="#eef0fb" stroke="#c9cdf0"/><rect x="0" y="21" width="20" height="2" fill="#8f9ae0"/><path d="M3 5H15M3 8H15M3 11H15M3 14H12" stroke="#c4c6d4" stroke-width="1"/><rect x="16" y="1" width="1" height="20" fill="#aab"/><circle cx="12" cy="10" r="4.3" fill="#d8dbe6" fill-opacity=".7" stroke="#0c0c4e" stroke-width="1.6"/><path d="M15.5 13.5 L21 19" stroke="#3a5fb0" stroke-width="2.6"/><path d="M15 13 L17 15" stroke="#e0a030" stroke-width="2"/></svg>
<svg style="left:1450px;top:768px" width="24" height="24" viewBox="0 0 24 24"><rect x="4.5" y="0.5" width="16" height="21" fill="#eef0fb" stroke="#d4d7f4"/><rect x="4" y="21" width="17" height="2" fill="#8f9ae0"/><path d="M1 4.5H6 M4.5 1.5 L8 4.5 L4.5 7.5 Z" stroke="#0c0c4e" stroke-width="2" fill="#0c0c4e"/><path d="M15 18.5H20 M19 15.5 L22.5 18.5 L19 21.5 Z" stroke="#0c0c4e" stroke-width="2" fill="#0c0c4e"/><rect x="11.3" y="4.2" width="3.200" height="3" fill="#0c0c4e"/><path d="M9.500 8.500 H14.600 V13.500 H16.600 V15.600 H9.500 V13.500 H11.500 V10.500 H9.500 Z" fill="#0c0c4e"/></svg>
<svg style="left:1535px;top:770px" width="20" height="20" viewBox="0 0 20 20"><circle cx="10" cy="10" r="9" fill="#f0d838" stroke="#d8b820" stroke-width="1"/><circle cx="9" cy="8" r="6" fill="#f8ec70" fill-opacity=".6"/><rect x="8.700" y="3.700" width="3.200" height="3" fill="#0c0c4e"/><path d="M7 8 H12 V13.200 H13.800 V15.200 H7 V13.200 H9 V10 H7 Z" fill="#0c0c4e"/></svg>
<svg style="left:1571px;top:768px" width="20" height="24" viewBox="0 0 20 24"><rect x="0.5" y="0.5" width="16" height="21" fill="#eef0fb" stroke="#c9cdf0"/><rect x="0" y="21" width="17" height="2" fill="#8f9ae0"/><path d="M3.5 3 V9 Q3.5 12.5 6 12.500 Q8.500 12.5 8.5 9 V3" fill="none" stroke="#111" stroke-width="1.3"/><path d="M6 12.5 V15.500 Q6 19 9.5 19 Q12 19 12 16.500" fill="none" stroke="#111" stroke-width="1.3"/><circle cx="12.500" cy="14.5" r="2" fill="#fff" stroke="#111" stroke-width="1"/><rect x="2.5" y="2" width="2" height="2" fill="#6070d0"/><rect x="7.5" y="2" width="2" height="2" fill="#6070d0"/></svg>
<div class="a" style="left:1784px;top:770px;width:12px;height:12px;background:#fff;"></div>
<div class="a" style="left:1780px;top:774px;width:12px;height:12px;background:#fff;box-shadow:0 0 0 1px #b0b0b0"></div>
<div class="a" style="left:1806px;top:769px;width:17px;height:17px;border:2px solid #ececec;background:linear-gradient(180deg,#c8c8c8 0 1px,#e0e0e0 1px 2px,#bcbcbc 2px 4px,#e0e0e0 4px 5px,#bcbcbc 5px 7px,#ececec 7px 9px,#b0b0b0 9px 13px)"></div>
<svg style="left:1833px;top:773px" width="8" height="9"><path d="M0 0 H15 L7.500 8.500 Z" fill="#f2f2f2"/></svg>
<div class="a" style="left:-1px;top:804px;width:123px;height:33px;background:linear-gradient(180deg,#f2f2f2 0%,#efefef 45%,#eaeaea 50%,#ebebeb 100%);border:1px solid #8c8c8c;border-bottom:none"></div>
<div class="t b" style="left:11px;top:807px;height:24px;line-height:24px;font-size:20px;letter-spacing:-0.2px">General</div>
<div class="a" style="left:124px;top:804px;width:119px;height:31px;background:linear-gradient(180deg,#e9e9e9 0%,#e5e5e5 48%,#d9d9d9 52%,#dbdbdb 100%);border:1px solid #8c8c8c;border-bottom:none;box-shadow:inset 1px 1px 0 #f4f4f4"></div>
<div class="t" style="left:142px;top:807px;height:24px;line-height:24px;font-size:19px;color:#4d4d4d">IO tags</div>
<div class="a" style="left:245px;top:804px;width:220px;height:31px;background:linear-gradient(180deg,#e9e9e9 0%,#e5e5e5 48%,#d9d9d9 52%,#dbdbdb 100%);border:1px solid #8c8c8c;border-bottom:none;box-shadow:inset 1px 1px 0 #f4f4f4"></div>
<div class="t" style="left:262px;top:807px;height:24px;line-height:24px;font-size:19px;color:#4d4d4d">System constants</div>
<div class="a" style="left:467px;top:804px;width:101px;height:31px;background:linear-gradient(180deg,#e9e9e9 0%,#e5e5e5 48%,#d9d9d9 52%,#dbdbdb 100%);border:1px solid #8c8c8c;border-bottom:none;box-shadow:inset 1px 1px 0 #f4f4f4"></div>
<div class="t" style="left:485px;top:807px;height:24px;line-height:24px;font-size:19px;color:#4d4d4d">Texts</div>
<div class="a" style="left:0px;top:836px;width:182px;height:432px;background:#f0f0f0;"></div>
<div class="a" style="left:0px;top:867px;width:181px;height:3px;background:linear-gradient(180deg,#eeeeee,#e9e9e9,#eeeeee);"></div>
<div class="a" style="left:0px;top:896px;width:181px;height:3px;background:linear-gradient(180deg,#eeeeee,#e9e9e9,#eeeeee);"></div>
<div class="a" style="left:0px;top:925px;width:181px;height:3px;background:linear-gradient(180deg,#eeeeee,#e9e9e9,#eeeeee);"></div>
<div class="a" style="left:0px;top:954px;width:181px;height:3px;background:linear-gradient(180deg,#eeeeee,#e9e9e9,#eeeeee);"></div>
<div class="a" style="left:0px;top:983px;width:181px;height:3px;background:linear-gradient(180deg,#eeeeee,#e9e9e9,#eeeeee);"></div>
<div class="a" style="left:0px;top:1012px;width:181px;height:3px;background:linear-gradient(180deg,#eeeeee,#e9e9e9,#eeeeee);"></div>
<div class="a" style="left:0px;top:1041px;width:181px;height:3px;background:linear-gradient(180deg,#eeeeee,#e9e9e9,#eeeeee);"></div>
<div class="a" style="left:0px;top:1070px;width:181px;height:3px;background:linear-gradient(180deg,#eeeeee,#e9e9e9,#eeeeee);"></div>
<div class="a" style="left:0px;top:1099px;width:181px;height:3px;background:linear-gradient(180deg,#eeeeee,#e9e9e9,#eeeeee);"></div>
<div class="a" style="left:0px;top:1128px;width:181px;height:3px;background:linear-gradient(180deg,#eeeeee,#e9e9e9,#eeeeee);"></div>
<div class="a" style="left:0px;top:1157px;width:181px;height:3px;background:linear-gradient(180deg,#eeeeee,#e9e9e9,#eeeeee);"></div>
<div class="a" style="left:0px;top:1186px;width:181px;height:3px;background:linear-gradient(180deg,#eeeeee,#e9e9e9,#eeeeee);"></div>
<div class="a" style="left:0px;top:1215px;width:181px;height:3px;background:linear-gradient(180deg,#eeeeee,#e9e9e9,#eeeeee);"></div>
<div class="a" style="left:0px;top:1244px;width:181px;height:3px;background:linear-gradient(180deg,#eeeeee,#e9e9e9,#eeeeee);"></div>
<div class="a" style="left:0px;top:1273px;width:181px;height:3px;background:linear-gradient(180deg,#eeeeee,#e9e9e9,#eeeeee);"></div>
<div class="a" style="left:0px;top:1302px;width:181px;height:3px;background:linear-gradient(180deg,#eeeeee,#e9e9e9,#eeeeee);"></div>
<div class="a" style="left:9px;top:900px;width:157px;height:25px;background:#4262c8;outline:1px dotted #222;outline-offset:-1px"></div>
<div class="t" style="left:12px;top:845.5px;font-size:16px;color:#000;letter-spacing:0.1px">General</div>
<div class="t" style="left:12px;top:874.5px;font-size:16px;color:#000;letter-spacing:0.05px">Ethernet addresses</div>
<div class="t" style="left:12px;top:903.5px;font-size:16px;color:#fff;letter-spacing:0.05px">Time synchroniz...</div>
<div class="t" style="left:12px;top:932.5px;font-size:16px;color:#000;letter-spacing:0.35px">Operating mode</div>
<div class="t" style="left:12px;top:961.5px;font-size:16px;color:#000;letter-spacing:0.2px">Advanced options</div>
<div class="t" style="left:36px;top:990.5px;font-size:16px;color:#000;letter-spacing:0.1px">Interface options</div>
<div class="t" style="left:36px;top:1019.5px;font-size:16px;color:#000;letter-spacing:0.1px">Real time sett...</div>
<div class="t" style="left:36px;top:1048.5px;font-size:16px;color:#000;letter-spacing:-0.1px">Port [X1 P1]</div>
<div class="t" style="left:12px;top:1077.5px;font-size:16px;color:#000;letter-spacing:-0.2px">Web server access</div>
<svg style="left:17px;top:1023px" width="8" height="12"><path d="M0.5 0 V11.5 L7 5.75 Z" fill="#000"/></svg>
<svg style="left:17px;top:1052px" width="8" height="12"><path d="M0.5 0 V11.5 L7 5.75 Z" fill="#000"/></svg>
<svg style="left:-7.5px;top:967px" width="10" height="8"><path d="M0 0.5 H9.5 L4.750 6 Z" fill="#000"/></svg>
<div class="a" style="left:182px;top:840px;width:12px;height:430px;background:#dedede;border:1px solid #8c8c8c;box-shadow:inset 1px 0 0 #f8f8f8"></div>
<div class="a" style="left:183px;top:1118px;width:9px;height:34px;background:linear-gradient(180deg,#a6a6a6,#e4e4e4);border-top:1px solid #888;border-bottom:1px solid #888"></div>
<svg style="left:0;top:0" width="1" height="1"><path d="M188.5 1131.5 L184.0 1136.0 L188.5 1140.5 Z" fill="#000"/></svg>
<div class="a" style="left:183px;top:1167px;width:9px;height:35px;background:linear-gradient(180deg,#a6a6a6,#e4e4e4);border-top:1px solid #888;border-bottom:1px solid #888"></div>
<svg style="left:0;top:0" width="1" height="1"><path d="M184.5 1181.0 L189.0 1185.5 L184.5 1190.0 Z" fill="#000"/></svg>
<div class="t b" style="left:216px;top:857px;height:26px;line-height:26px;font-size:20px;letter-spacing:-0.1px">Time synchronization</div>
<div class="a" style="left:443px;top:879px;width:1380px;height:1px;background:#000;"></div>
<div class="a" style="left:212px;top:894px;width:1611px;height:369px;background:#cdcdcd;"></div>
<div class="a" style="left:518px;top:931px;width:21px;height:20px;border:1px solid #7c7c7c;border-radius:3.5px;background:linear-gradient(180deg,#fdfdfd,#dcdcdc);box-shadow:inset 0 0 0 1px #fff"></div>
<svg style="left:518px;top:931px" width="20" height="20"><path d="M4 8.600 L9 14.300 L17.300 4.600" fill="none" stroke="#5c5c5c" stroke-width="3"/></svg>
<div class="a" style="left:518px;top:1219px;width:21px;height:20px;border:1px solid #7c7c7c;border-radius:3.5px;background:linear-gradient(180deg,#fdfdfd,#dcdcdc);box-shadow:inset 0 0 0 1px #fff"></div>
<div class="t" style="left:545px;top:932px;font-size:16px;color:#000;letter-spacing:0.1px">Enable time synchronization via NTP server</div>
<div class="t" style="left:545px;top:1220px;font-size:16px;color:#000;letter-spacing:0.1px">CPU synchronizes the modules of the device.</div>
<div class="t" style="left:522px;top:970px;font-size:16px;color:#000;">IP addresses</div>
<div class="a" style="left:518px;top:1002px;width:202px;height:26px;background:#e1e1e1;border:1px solid #8a8a8a"></div>
<div class="t" style="left:380px;top:1006px;width:123px;text-align:right;letter-spacing:0.1px">Server 1:</div>
<div class="t" style="left:529px;top:1007px;font-size:16px;color:#000;">10</div>
<div class="t" style="left:581px;top:1007px;font-size:16px;color:#000;">0</div>
<div class="t" style="left:569px;top:1007px;font-size:16px;color:#000;">.</div>
<div class="t" style="left:633px;top:1007px;font-size:16px;color:#000;">31</div>
<div class="t" style="left:621px;top:1007px;font-size:16px;color:#000;">.</div>
<div class="t" style="left:685px;top:1007px;font-size:16px;color:#000;">1</div>
<div class="t" style="left:673px;top:1007px;font-size:16px;color:#000;">.</div>
<div class="a" style="left:518px;top:1038px;width:202px;height:26px;background:#e1e1e1;border:1px solid #8a8a8a"></div>
<div class="t" style="left:380px;top:1042px;width:123px;text-align:right;letter-spacing:0.1px">Server 2:</div>
<div class="t" style="left:529px;top:1043px;font-size:16px;color:#000;">0</div>
<div class="t" style="left:581px;top:1043px;font-size:16px;color:#000;">0</div>
<div class="t" style="left:569px;top:1043px;font-size:16px;color:#000;">.</div>
<div class="t" style="left:633px;top:1043px;font-size:16px;color:#000;">0</div>
<div class="t" style="left:621px;top:1043px;font-size:16px;color:#000;">.</div>
<div class="t" style="left:685px;top:1043px;font-size:16px;color:#000;">0</div>
<div class="t" style="left:673px;top:1043px;font-size:16px;color:#000;">.</div>
<div class="a" style="left:518px;top:1074px;width:202px;height:26px;background:#e1e1e1;border:1px solid #8a8a8a"></div>
<div class="t" style="left:380px;top:1078px;width:123px;text-align:right;letter-spacing:0.1px">Server 3:</div>
<div class="t" style="left:529px;top:1079px;font-size:16px;color:#000;">0</div>
<div class="t" style="left:581px;top:1079px;font-size:16px;color:#000;">0</div>
<div class="t" style="left:569px;top:1079px;font-size:16px;color:#000;">.</div>
<div class="t" style="left:633px;top:1079px;font-size:16px;color:#000;">0</div>
<div class="t" style="left:621px;top:1079px;font-size:16px;color:#000;">.</div>
<div class="t" style="left:685px;top:1079px;font-size:16px;color:#000;">0</div>
<div class="t" style="left:673px;top:1079px;font-size:16px;color:#000;">.</div>
<div class="a" style="left:518px;top:1110px;width:202px;height:26px;background:#e1e1e1;border:1px solid #8a8a8a"></div>
<div class="t" style="left:380px;top:1114px;width:123px;text-align:right;letter-spacing:0.1px">Server 4:</div>
<div class="t" style="left:529px;top:1115px;font-size:16px;color:#000;">0</div>
<div class="t" style="left:581px;top:1115px;font-size:16px;color:#000;">0</div>
<div class="t" style="left:569px;top:1115px;font-size:16px;color:#000;">.</div>
<div class="t" style="left:633px;top:1115px;font-size:16px;color:#000;">0</div>
<div class="t" style="left:621px;top:1115px;font-size:16px;color:#000;">.</div>
<div class="t" style="left:685px;top:1115px;font-size:16px;color:#000;">0</div>
<div class="t" style="left:673px;top:1115px;font-size:16px;color:#000;">.</div>
<div class="t" style="left:340px;top:1150px;width:163px;text-align:right;letter-spacing:0.2px">Update interval:</div>
<div class="a" style="left:518px;top:1146px;width:270px;height:27px;background:#e1e1e1;border:1px solid #8a8a8a"></div>
<div class="t" style="left:523px;top:1150px;font-size:16px;color:#000;">10</div>
<div class="t" style="left:700px;top:1150px;width:82px;text-align:right">sec</div>
</body></html>
